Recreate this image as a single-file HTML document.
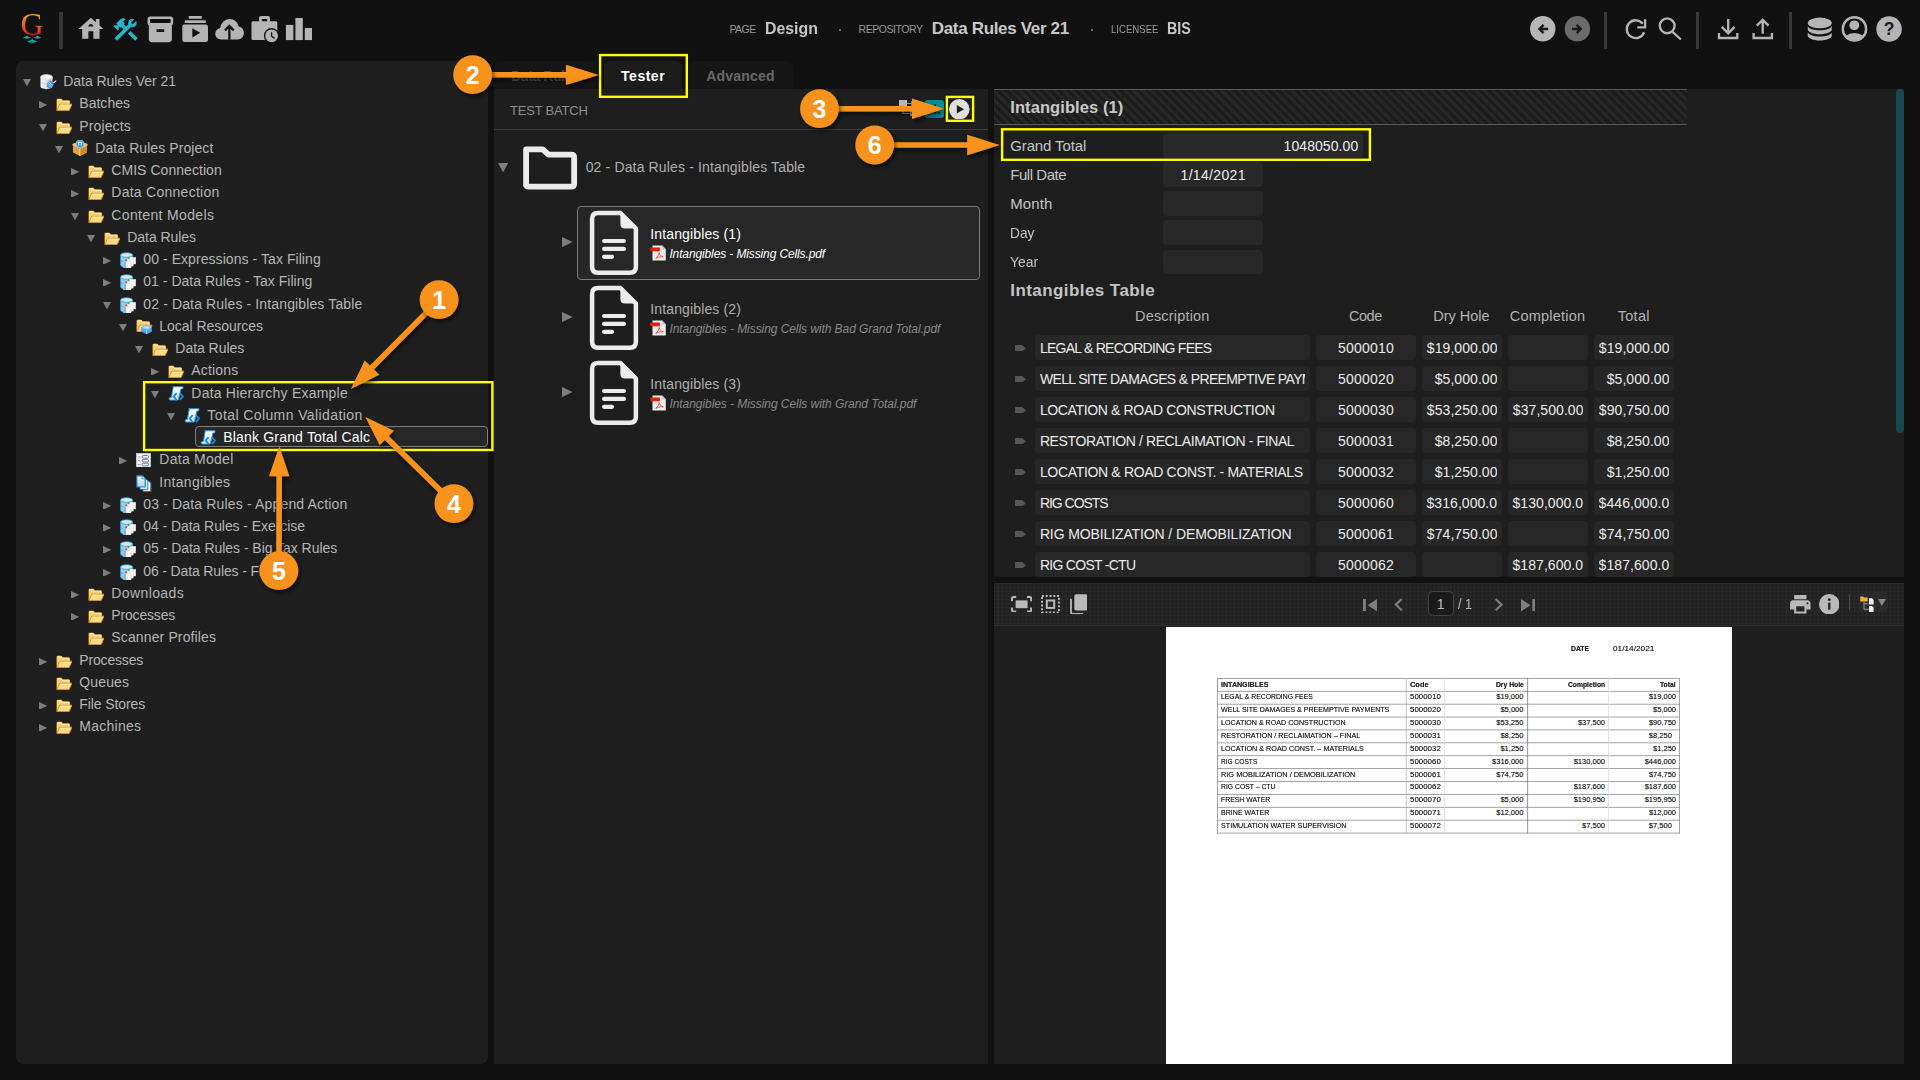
<!DOCTYPE html>
<html lang="en"><head><meta charset="utf-8"><title>Grooper Design - Data Rules Ver 21</title>
<style>
html,body{margin:0;padding:0;background:#111111;}
body{width:1920px;height:1080px;position:relative;overflow:hidden;font-family:"Liberation Sans",sans-serif;}
.b{position:absolute;display:block;box-sizing:border-box;}
.t{position:absolute;white-space:pre;line-height:20px;font-family:"Liberation Sans",sans-serif;}
</style></head>
<body>
<span class="t" style="left:20.400px;top:7px;font-family:'Liberation Serif',serif;font-size:32px;line-height:34px;background:linear-gradient(#f7a01e 25%,#f1582a 55%,#ec1c24 82%);-webkit-background-clip:text;background-clip:text;color:transparent;">G</span>
<svg class="b" style="left:21.00px;top:34.00px;" width="22.00" height="10.00" viewBox="0 0 22 10"><g fill="#12a79d"><path d="M1.3 3.6 Q5.8 2.6 5.9 .9 Q6.2 2.6 10.3 3.6 Q5.8 5.9 1.3 3.6z"/><path d="M12.1 3.6 Q16.4 2.6 16.6 .9 Q16.8 2.6 20.9 3.6 Q16.5 5.9 12.1 3.6z"/><path d="M6.1 7.4 Q10.9 6.4 11.2 4.6 Q11.5 6.4 16.3 7.4 Q11.2 9.9 6.1 7.4z"/></g></svg>
<div class="b" style="left:59.40px;top:12.00px;width:3.20px;height:36.80px;background:#383838;"></div>
<div class="b" style="left:1603.60px;top:12.00px;width:3.20px;height:36.80px;background:#383838;"></div>
<div class="b" style="left:1696.30px;top:12.00px;width:3.20px;height:36.80px;background:#383838;"></div>
<div class="b" style="left:1788.60px;top:12.00px;width:3.20px;height:36.80px;background:#383838;"></div>
<svg class="b" style="left:76.12px;top:14.00px;" width="29.76" height="29.76" viewBox="0 0 24 24"><path fill="#b4b4b4" d="M19 9.3V4h-3v2.6L12 3 2 12h3v8h5v-6h4v6h5v-8h3l-3-2.7zm-9 .7c0-1.1.9-2 2-2s2 .9 2 2h-4z"/></svg>
<svg class="b" style="left:111.13px;top:14.60px;" width="29.33" height="29.33" viewBox="0 0 24 24"><path fill="#25b7c9" d="M13.783 15.172l2.121-2.121 5.996 5.996-2.121 2.121zM17.5 10c1.93 0 3.5-1.57 3.5-3.5 0-.58-.16-1.12-.41-1.6l-2.7 2.7-1.49-1.49 2.7-2.7c-.48-.25-1.02-.41-1.6-.41C15.57 3 14 4.57 14 6.5c0 .41.08.8.21 1.16l-1.85 1.85-1.78-1.78.71-.71-1.41-1.41L12 3.49c-1.17-1.17-3.07-1.17-4.24 0L4.22 7.03l1.41 1.41H2.81l-.71.71 3.54 3.54.71-.71V9.15l1.41 1.41.71-.71 1.78 1.78-7.41 7.41 2.12 2.12L16.34 9.79c.36.13.75.21 1.16.21z"/></svg>
<svg class="b" style="left:144.94px;top:14.00px;" width="30.72" height="30.72" viewBox="0 0 24 24"><path fill="#b4b4b4" d="M20 2H4c-1 0-2 .9-2 2v3.01c0 .72.43 1.34 1 1.69V20c0 1.1 1.1 2 2 2h14c.9 0 2-.9 2-2V8.7c.57-.35 1-.97 1-1.69V4c0-1.1-1-2-2-2zm-5 12H9v-2h6v2zm5-7H4V4h16v3z"/></svg>
<svg class="b" style="left:0;top:0" width="400" height="60" viewBox="0 0 400 60"><g fill="#b4b4b4"><rect x="188.700" y="16" width="13.100" height="2.800" rx=".5"/><rect x="184.700" y="20.200" width="21.100" height="2.900" rx=".5"/><rect x="182.300" y="24.400" width="25.700" height="17.700" rx="2.400"/></g><path d="M192.300 28.200L200.200 32.800 192.300 37.400z" fill="#111"/><path fill="#b4b4b4" d="M221.300 39.500C217.900 39.500 215.300 37.100 215.300 33.800C215.300 30.900 217.300 28.700 220.200 28.100C221.100 22.800 224.800 18.900 229.800 18.900C234.300 18.900 237.700 21.900 238.600 26.600C241.600 26.900 243.900 29.500 243.900 32.800C243.900 36.500 241.200 39.500 237.700 39.500z"/><path d="M229.350 39.700V26.600M225 30.400L229.350 25.800 233.700 30.400" fill="none" stroke="#151515" stroke-width="2.300"/><path fill="#b4b4b4" fill-rule="evenodd" d="M253 21.200H259V18Q259 16 261 16H268Q270 16 270 18V21.200H275.800Q277.300 21.200 277.300 22.700V38.600Q277.300 40.100 275.800 40.100H253Q251.500 40.100 251.500 38.600V22.700Q251.500 21.200 253 21.200zM261.900 21.200H267.100V19.100H261.900z"/><circle cx="271.600" cy="35.800" r="7.700" fill="#111"/><circle cx="271.600" cy="35.800" r="6.400" fill="#b4b4b4"/><path d="M271.600 32.300V36.100L274.700 38.400" fill="none" stroke="#161616" stroke-width="1.300"/><g fill="#b4b4b4"><rect x="285.900" y="24.900" width="7.500" height="15.200"/><rect x="295.400" y="18" width="7.400" height="22.100"/><rect x="304.800" y="28" width="7.200" height="12.100"/></g></svg>
<span class="t" style="left:729.40px;top:19.00px;font-size:10.5px;color:#9a9a9a;letter-spacing:-0.533px;">PAGE</span>
<span class="t" style="left:765.40px;top:18.50px;font-size:17px;color:#c8c8c8;transform-origin:0 50%;transform:scaleX(0.9333);font-weight:700;">Design</span>
<div class="b" style="left:838.80px;top:28.80px;width:2.60px;height:2.60px;background:#888;border-radius:2px;"></div>
<span class="t" style="left:858.60px;top:19.00px;font-size:10.5px;color:#9a9a9a;letter-spacing:-0.463px;">REPOSITORY</span>
<span class="t" style="left:931.80px;top:18.50px;font-size:17px;color:#c8c8c8;letter-spacing:-0.331px;font-weight:700;">Data Rules Ver 21</span>
<div class="b" style="left:1090.60px;top:28.80px;width:2.60px;height:2.60px;background:#888;border-radius:2px;"></div>
<span class="t" style="left:1110.50px;top:19.00px;font-size:10.5px;color:#9a9a9a;transform-origin:0 50%;transform:scaleX(0.9146);">LICENSEE</span>
<span class="t" style="left:1167.20px;top:18.50px;font-size:17px;color:#c8c8c8;transform-origin:0 50%;transform:scaleX(0.8363);font-weight:700;">BIS</span>
<svg class="b" style="left:0;top:0" width="1920" height="60" viewBox="0 0 1920 60"><circle cx="1542.75" cy="28.8" r="12.75" fill="#b6b6b6"/><path d="M1548.2 29H1539.6M1543.6 24.9L1539.4 29 1543.6 33.100" fill="none" stroke="#161616" stroke-width="2.350"/><circle cx="1577.4" cy="28.8" r="12.75" fill="#6b6b6b"/><path d="M1572 29H1580.600M1576.600 24.900L1580.800 29 1576.600 33.100" fill="none" stroke="#1c1c1c" stroke-width="2.350"/><path d="M1642.71 23.72A8.9 8.9 0 1 0 1644.06 32.24" fill="none" stroke="#b4b4b4" stroke-width="2.350"/><path d="M1645.1 19.300V27.300H1637.300" fill="none" stroke="#b4b4b4" stroke-width="2.350"/><circle cx="1667.2" cy="25.800" r="7.400" fill="none" stroke="#b4b4b4" stroke-width="2.350"/><path d="M1672.300 31.700L1680.900 39.500" stroke="#b4b4b4" stroke-width="2.300"/><g fill="none" stroke="#b4b4b4" stroke-width="2.350"><path d="M1719 32.900V38H1737.300V32.900M1728.200 18.900V33M1721.800 26.900L1728.200 33.300 1734.600 26.900"/><path d="M1753.600 32.900V38H1771.900V32.900M1762.700 33.700V20M1756.800 25.700L1762.700 19.800 1768.600 25.700"/></g><g fill="#b4b4b4"><ellipse cx="1819.750" cy="22.900" rx="12.050" ry="5.300"/><path d="M1807.700 26.300c1.600 2.700 6.300 4 12.050 4s10.450-1.300 12.050-4v3c0 2.800-5.400 5-12.050 5s-12.050-2.200-12.050-5z"/><path d="M1807.700 32.400c1.600 2.700 6.300 4 12.050 4s10.450-1.300 12.050-4v3c0 2.800-5.400 5-12.050 5s-12.050-2.200-12.050-5z"/></g><clipPath id="uc"><circle cx="1854.450" cy="28.900" r="11.600"/></clipPath><circle cx="1854.450" cy="28.900" r="11.650" fill="none" stroke="#b4b4b4" stroke-width="2.400"/><circle cx="1854.300" cy="25.300" r="4.900" fill="#b4b4b4"/><ellipse cx="1854.450" cy="42.500" rx="12" ry="9.400" fill="#b4b4b4" clip-path="url(#uc)"/><circle cx="1889.050" cy="28.900" r="12.750" fill="#b4b4b4"/></svg>
<span class="t" style="left:1883.700px;top:19.300px;font-size:17.500px;font-weight:700;line-height:20px;color:#1c1c1c;">?</span>
<div class="b" style="left:16.00px;top:61.00px;width:472.00px;height:1002.50px;background:#1f1f1f;border-radius:7px;"></div>
<div class="b" style="left:195.00px;top:426.00px;width:293.00px;height:21.20px;background:#272727;border:1px solid #808080;border-radius:4px;"></div>
<svg class="b" style="left:23.20px;top:79.00px;" width="8.00" height="7.40" viewBox="0 0 8 7.400"><path d="M0 0H8L4 7.400z" fill="#7e7e7e"/></svg>
<svg class="b" style="left:39.80px;top:73.60px;" width="17.00" height="16.00" viewBox="0 0 17 16"><defs><linearGradient id="dbg" x1="0" x2="1"><stop offset="0" stop-color="#f4f6f8"/><stop offset=".5" stop-color="#dfe4ea"/><stop offset="1" stop-color="#aab4c0"/></linearGradient></defs><path d="M.5 3v9.500c0 1.400 2.700 2.500 6 2.500s6-1.100 6-2.500V3z" fill="url(#dbg)"/><ellipse cx="6.500" cy="3" rx="6" ry="2.500" fill="#f6f8fa" stroke="#c5ccd4" stroke-width=".6"/><path d="M.5 7.600c0 1.400 2.700 2.400 6 2.400" fill="none" stroke="#b8c0ca" stroke-width=".8"/><path d="M7.200 9.300l3.300-2.600 3 3.600-2.600 3.800-3.600-1z" fill="#4aa3ec" stroke="#2b7fd0" stroke-width=".6"/><path d="M8.200 9.600l3.400 3.400M9.500 8.400l3 3.300" stroke="#d6ecff" stroke-width=".7"/><path d="M13.200 9.200L16.200 6.600M10.800 6.400L12.500 4.500" stroke="#e4e4e4" stroke-width="1.100"/><path d="M7.400 13.700L5.700 15.300" stroke="#d8d8d8" stroke-width="1.200"/></svg>
<span class="t" style="left:63.30px;top:71.00px;font-size:14px;color:#b6b6b6;letter-spacing:-0.058px;">Data Rules Ver 21</span>
<svg class="b" style="left:39.00px;top:100.60px;" width="8.20" height="7.80" viewBox="0 0 8.200 7.800"><path d="M0 0L8.200 3.900 0 7.800z" fill="#7e7e7e"/></svg>
<svg class="b" style="left:55.50px;top:97.80px;" width="16.90" height="13.60" viewBox="0 0 17.5 13.8"><path d="M1 12.3V1.7Q1 1 1.700 1H5.600L7 2.700H13.500Q14.100 2.700 14.100 3.400V6" fill="#f3c766" stroke="#c98a2b" stroke-width="1"/><path d="M1 12.300V1.700Q1 1 1.700 1H5.600L7 2.700H13.500Q14.100 2.700 14.100 3.400V7H4z" fill="#f6cf72"/><path d="M1.800 2h3.400l1.300 1.600h6.700v2.500" fill="none" stroke="#fff2c4" stroke-width=".8"/><path d="M3.800 6.300H16.600L13.600 12.900H.900z" fill="#fbdb85" stroke="#cf9433" stroke-width="1" stroke-linejoin="round"/><path d="M4.500 7.300H15.100" stroke="#fff4cc" stroke-width=".8"/></svg>
<span class="t" style="left:79.30px;top:93.00px;font-size:14px;color:#b6b6b6;letter-spacing:0.018px;">Batches</span>
<svg class="b" style="left:39.20px;top:124.00px;" width="8.00" height="7.40" viewBox="0 0 8 7.400"><path d="M0 0H8L4 7.400z" fill="#7e7e7e"/></svg>
<svg class="b" style="left:55.50px;top:120.80px;" width="16.90" height="13.60" viewBox="0 0 17.5 13.8"><path d="M1 12.3V1.7Q1 1 1.700 1H5.600L7 2.700H13.500Q14.100 2.700 14.100 3.400V6" fill="#f3c766" stroke="#c98a2b" stroke-width="1"/><path d="M1 12.300V1.700Q1 1 1.700 1H5.600L7 2.700H13.500Q14.100 2.700 14.100 3.400V7H4z" fill="#f6cf72"/><path d="M1.800 2h3.400l1.300 1.600h6.700v2.500" fill="none" stroke="#fff2c4" stroke-width=".8"/><path d="M3.800 6.300H16.600L13.600 12.900H.900z" fill="#fbdb85" stroke="#cf9433" stroke-width="1" stroke-linejoin="round"/><path d="M4.500 7.300H15.100" stroke="#fff4cc" stroke-width=".8"/></svg>
<span class="t" style="left:79.30px;top:116.00px;font-size:14px;color:#b6b6b6;letter-spacing:0.118px;">Projects</span>
<svg class="b" style="left:55.20px;top:146.00px;" width="8.00" height="7.40" viewBox="0 0 8 7.400"><path d="M0 0H8L4 7.400z" fill="#7e7e7e"/></svg>
<svg class="b" style="left:72.00px;top:139.80px;" width="16.00" height="16.50" viewBox="0 0 16 16.500"><path d="M1 6.200L8 9l7-2.800V12.500L8 16 1 12.500z" fill="#e3a542"/><path d="M8 9l7-2.800V12.500L8 16z" fill="#c98a2b"/><path d="M1 6.200L.2 3.900 5 2.300 8 5l3-2.700 4.800 1.600L15 6.200 8 9z" fill="#f1c064"/><path d="M7.700 9V15.800" stroke="#fbe2a0" stroke-width=".8"/><circle cx="8" cy="3.800" r="3.900" fill="#2f8fe0"/><circle cx="8" cy="3.800" r="3.900" fill="none" stroke="#8fd0ff" stroke-width=".7"/><path d="M5.500 2.700c1.500-.8 3.500-.8 5 0M6.800 2.300v3.500M9.200 2.300v3.500" stroke="#fff" stroke-width=".9" fill="none"/></svg>
<span class="t" style="left:95.30px;top:138.00px;font-size:14px;color:#b6b6b6;letter-spacing:0.075px;">Data Rules Project</span>
<svg class="b" style="left:71.00px;top:167.60px;" width="8.20" height="7.80" viewBox="0 0 8.200 7.800"><path d="M0 0L8.200 3.900 0 7.800z" fill="#7e7e7e"/></svg>
<svg class="b" style="left:87.50px;top:164.80px;" width="16.90" height="13.60" viewBox="0 0 17.5 13.8"><path d="M1 12.3V1.7Q1 1 1.700 1H5.600L7 2.700H13.500Q14.100 2.700 14.100 3.400V6" fill="#f3c766" stroke="#c98a2b" stroke-width="1"/><path d="M1 12.300V1.700Q1 1 1.700 1H5.600L7 2.700H13.500Q14.100 2.700 14.100 3.400V7H4z" fill="#f6cf72"/><path d="M1.800 2h3.400l1.300 1.600h6.700v2.500" fill="none" stroke="#fff2c4" stroke-width=".8"/><path d="M3.800 6.300H16.600L13.600 12.900H.900z" fill="#fbdb85" stroke="#cf9433" stroke-width="1" stroke-linejoin="round"/><path d="M4.500 7.300H15.100" stroke="#fff4cc" stroke-width=".8"/></svg>
<span class="t" style="left:111.30px;top:160.00px;font-size:14px;color:#b6b6b6;letter-spacing:0.048px;">CMIS Connection</span>
<svg class="b" style="left:71.00px;top:189.60px;" width="8.20" height="7.80" viewBox="0 0 8.200 7.800"><path d="M0 0L8.200 3.900 0 7.800z" fill="#7e7e7e"/></svg>
<svg class="b" style="left:87.50px;top:186.80px;" width="16.90" height="13.60" viewBox="0 0 17.5 13.8"><path d="M1 12.3V1.7Q1 1 1.700 1H5.600L7 2.700H13.500Q14.100 2.700 14.100 3.400V6" fill="#f3c766" stroke="#c98a2b" stroke-width="1"/><path d="M1 12.300V1.700Q1 1 1.700 1H5.600L7 2.700H13.500Q14.100 2.700 14.100 3.400V7H4z" fill="#f6cf72"/><path d="M1.800 2h3.400l1.300 1.600h6.700v2.500" fill="none" stroke="#fff2c4" stroke-width=".8"/><path d="M3.800 6.300H16.600L13.600 12.900H.900z" fill="#fbdb85" stroke="#cf9433" stroke-width="1" stroke-linejoin="round"/><path d="M4.500 7.300H15.100" stroke="#fff4cc" stroke-width=".8"/></svg>
<span class="t" style="left:111.30px;top:182.00px;font-size:14px;color:#b6b6b6;letter-spacing:0.264px;">Data Connection</span>
<svg class="b" style="left:71.20px;top:213.00px;" width="8.00" height="7.40" viewBox="0 0 8 7.400"><path d="M0 0H8L4 7.400z" fill="#7e7e7e"/></svg>
<svg class="b" style="left:87.50px;top:209.80px;" width="16.90" height="13.60" viewBox="0 0 17.5 13.8"><path d="M1 12.3V1.7Q1 1 1.700 1H5.600L7 2.700H13.500Q14.100 2.700 14.100 3.400V6" fill="#f3c766" stroke="#c98a2b" stroke-width="1"/><path d="M1 12.300V1.700Q1 1 1.700 1H5.600L7 2.700H13.500Q14.100 2.700 14.100 3.400V7H4z" fill="#f6cf72"/><path d="M1.800 2h3.400l1.300 1.600h6.700v2.500" fill="none" stroke="#fff2c4" stroke-width=".8"/><path d="M3.800 6.300H16.600L13.600 12.900H.900z" fill="#fbdb85" stroke="#cf9433" stroke-width="1" stroke-linejoin="round"/><path d="M4.500 7.300H15.100" stroke="#fff4cc" stroke-width=".8"/></svg>
<span class="t" style="left:111.30px;top:205.00px;font-size:14px;color:#b6b6b6;letter-spacing:0.356px;">Content Models</span>
<svg class="b" style="left:87.20px;top:235.00px;" width="8.00" height="7.40" viewBox="0 0 8 7.400"><path d="M0 0H8L4 7.400z" fill="#7e7e7e"/></svg>
<svg class="b" style="left:103.50px;top:231.80px;" width="16.90" height="13.60" viewBox="0 0 17.5 13.8"><path d="M1 12.3V1.7Q1 1 1.700 1H5.600L7 2.700H13.500Q14.100 2.700 14.100 3.400V6" fill="#f3c766" stroke="#c98a2b" stroke-width="1"/><path d="M1 12.300V1.700Q1 1 1.700 1H5.600L7 2.700H13.500Q14.100 2.700 14.100 3.400V7H4z" fill="#f6cf72"/><path d="M1.800 2h3.400l1.300 1.600h6.700v2.500" fill="none" stroke="#fff2c4" stroke-width=".8"/><path d="M3.800 6.300H16.600L13.600 12.900H.900z" fill="#fbdb85" stroke="#cf9433" stroke-width="1" stroke-linejoin="round"/><path d="M4.500 7.300H15.100" stroke="#fff4cc" stroke-width=".8"/></svg>
<span class="t" style="left:127.30px;top:227.00px;font-size:14px;color:#b6b6b6;letter-spacing:-0.063px;">Data Rules</span>
<svg class="b" style="left:103.00px;top:256.60px;" width="8.20" height="7.80" viewBox="0 0 8.200 7.800"><path d="M0 0L8.200 3.900 0 7.800z" fill="#7e7e7e"/></svg>
<svg class="b" style="left:120.00px;top:251.90px;" width="17.00" height="16.50" viewBox="0 0 17 16.500"><path d="M.6 3v10c0 1.300 2.700 2.400 6 2.400s6-1.100 6-2.400V3z" fill="#8fd0ee" stroke="#3b9bd2" stroke-width=".8"/><ellipse cx="6.600" cy="3" rx="6" ry="2.300" fill="#cfeefa" stroke="#3b9bd2" stroke-width=".8"/><path d="M.6 7.800c0 1.300 2.700 2.300 6 2.300" fill="none" stroke="#3b9bd2" stroke-width=".7"/><rect x="8.600" y="5.300" width="7.200" height="6.700" fill="#fff" stroke="#d0d0d0" stroke-width=".4"/><rect x="6.100" y="7.400" width="7.200" height="6.700" fill="#fafafa" stroke="#cfcfcf" stroke-width=".4"/><rect x="3.700" y="9.600" width="7.300" height="6.500" fill="#f4f4f4" stroke="#c4c4c4" stroke-width=".4"/><rect x="3.700" y="9.600" width="2.200" height="6.500" fill="#7ab6ec"/><circle cx="6.300" cy="8.200" r="1.050" fill="#e8392c"/><circle cx="8.700" cy="6" r="1" fill="#3fa51f"/></svg>
<span class="t" style="left:143.30px;top:249.00px;font-size:14px;color:#b6b6b6;letter-spacing:0.064px;">00 - Expressions - Tax Filing</span>
<svg class="b" style="left:103.00px;top:278.60px;" width="8.20" height="7.80" viewBox="0 0 8.200 7.800"><path d="M0 0L8.200 3.900 0 7.800z" fill="#7e7e7e"/></svg>
<svg class="b" style="left:120.00px;top:273.90px;" width="17.00" height="16.50" viewBox="0 0 17 16.500"><path d="M.6 3v10c0 1.300 2.700 2.400 6 2.400s6-1.100 6-2.400V3z" fill="#8fd0ee" stroke="#3b9bd2" stroke-width=".8"/><ellipse cx="6.600" cy="3" rx="6" ry="2.300" fill="#cfeefa" stroke="#3b9bd2" stroke-width=".8"/><path d="M.6 7.800c0 1.300 2.700 2.300 6 2.300" fill="none" stroke="#3b9bd2" stroke-width=".7"/><rect x="8.600" y="5.300" width="7.200" height="6.700" fill="#fff" stroke="#d0d0d0" stroke-width=".4"/><rect x="6.100" y="7.400" width="7.200" height="6.700" fill="#fafafa" stroke="#cfcfcf" stroke-width=".4"/><rect x="3.700" y="9.600" width="7.300" height="6.500" fill="#f4f4f4" stroke="#c4c4c4" stroke-width=".4"/><rect x="3.700" y="9.600" width="2.200" height="6.500" fill="#7ab6ec"/><circle cx="6.300" cy="8.200" r="1.050" fill="#e8392c"/><circle cx="8.700" cy="6" r="1" fill="#3fa51f"/></svg>
<span class="t" style="left:143.30px;top:271.00px;font-size:14px;color:#b6b6b6;letter-spacing:0.014px;">01 - Data Rules - Tax Filing</span>
<svg class="b" style="left:103.20px;top:302.00px;" width="8.00" height="7.40" viewBox="0 0 8 7.400"><path d="M0 0H8L4 7.400z" fill="#7e7e7e"/></svg>
<svg class="b" style="left:120.00px;top:296.90px;" width="17.00" height="16.50" viewBox="0 0 17 16.500"><path d="M.6 3v10c0 1.300 2.700 2.400 6 2.400s6-1.100 6-2.400V3z" fill="#8fd0ee" stroke="#3b9bd2" stroke-width=".8"/><ellipse cx="6.600" cy="3" rx="6" ry="2.300" fill="#cfeefa" stroke="#3b9bd2" stroke-width=".8"/><path d="M.6 7.800c0 1.300 2.700 2.300 6 2.300" fill="none" stroke="#3b9bd2" stroke-width=".7"/><rect x="8.600" y="5.300" width="7.200" height="6.700" fill="#fff" stroke="#d0d0d0" stroke-width=".4"/><rect x="6.100" y="7.400" width="7.200" height="6.700" fill="#fafafa" stroke="#cfcfcf" stroke-width=".4"/><rect x="3.700" y="9.600" width="7.300" height="6.500" fill="#f4f4f4" stroke="#c4c4c4" stroke-width=".4"/><rect x="3.700" y="9.600" width="2.200" height="6.500" fill="#7ab6ec"/><circle cx="6.300" cy="8.200" r="1.050" fill="#e8392c"/><circle cx="8.700" cy="6" r="1" fill="#3fa51f"/></svg>
<span class="t" style="left:143.30px;top:294.00px;font-size:14px;color:#b6b6b6;letter-spacing:0.130px;">02 - Data Rules - Intangibles Table</span>
<svg class="b" style="left:119.20px;top:324.00px;" width="8.00" height="7.40" viewBox="0 0 8 7.400"><path d="M0 0H8L4 7.400z" fill="#7e7e7e"/></svg>
<svg class="b" style="left:135.80px;top:318.70px;" width="16.90" height="13.60" viewBox="0 0 17.5 13.8"><path d="M1 12.3V1.7Q1 1 1.700 1H5.600L7 2.700H13.500Q14.100 2.700 14.100 3.400V6" fill="#f3c766" stroke="#c98a2b" stroke-width="1"/><path d="M1 12.300V1.700Q1 1 1.700 1H5.600L7 2.700H13.500Q14.100 2.700 14.100 3.400V7H4z" fill="#f6cf72"/><path d="M1.800 2h3.400l1.300 1.600h6.700v2.500" fill="none" stroke="#fff2c4" stroke-width=".8"/><path d="M3.800 6.300H16.600L13.600 12.900H.900z" fill="#fbdb85" stroke="#cf9433" stroke-width="1" stroke-linejoin="round"/><path d="M4.500 7.300H15.100" stroke="#fff4cc" stroke-width=".8"/></svg>
<svg class="b" style="left:141.20px;top:325.00px;" width="11.20" height="9.60" viewBox="0 0 12 10"><path d="M6 .3L11.500 2.500V6.800L6 9.600.5 6.800V2.500z" fill="#5aa9ee" stroke="#3d8fe0" stroke-width=".5"/><path d="M.5 2.500L6 4.600l5.500-2.100L6 .3z" fill="#9ccdf8"/><path d="M6 4.600V9.600M3.200 1.500l5.500 2.100M8.700 1.500L3.200 3.600" stroke="#d5eaff" stroke-width=".6"/></svg>
<span class="t" style="left:159.30px;top:316.00px;font-size:14px;color:#b6b6b6;letter-spacing:-0.042px;">Local Resources</span>
<svg class="b" style="left:135.20px;top:346.00px;" width="8.00" height="7.40" viewBox="0 0 8 7.400"><path d="M0 0H8L4 7.400z" fill="#7e7e7e"/></svg>
<svg class="b" style="left:151.50px;top:342.80px;" width="16.90" height="13.60" viewBox="0 0 17.5 13.8"><path d="M1 12.3V1.7Q1 1 1.700 1H5.600L7 2.700H13.500Q14.100 2.700 14.100 3.400V6" fill="#f3c766" stroke="#c98a2b" stroke-width="1"/><path d="M1 12.300V1.700Q1 1 1.700 1H5.600L7 2.700H13.500Q14.100 2.700 14.100 3.400V7H4z" fill="#f6cf72"/><path d="M1.800 2h3.400l1.300 1.600h6.700v2.500" fill="none" stroke="#fff2c4" stroke-width=".8"/><path d="M3.800 6.300H16.600L13.600 12.900H.900z" fill="#fbdb85" stroke="#cf9433" stroke-width="1" stroke-linejoin="round"/><path d="M4.500 7.300H15.100" stroke="#fff4cc" stroke-width=".8"/></svg>
<span class="t" style="left:175.30px;top:338.00px;font-size:14px;color:#b6b6b6;letter-spacing:-0.029px;">Data Rules</span>
<svg class="b" style="left:151.00px;top:367.60px;" width="8.20" height="7.80" viewBox="0 0 8.200 7.800"><path d="M0 0L8.200 3.900 0 7.800z" fill="#7e7e7e"/></svg>
<svg class="b" style="left:167.50px;top:364.80px;" width="16.90" height="13.60" viewBox="0 0 17.5 13.8"><path d="M1 12.3V1.7Q1 1 1.700 1H5.600L7 2.700H13.500Q14.100 2.700 14.100 3.400V6" fill="#f3c766" stroke="#c98a2b" stroke-width="1"/><path d="M1 12.300V1.700Q1 1 1.700 1H5.600L7 2.700H13.500Q14.100 2.700 14.100 3.400V7H4z" fill="#f6cf72"/><path d="M1.800 2h3.400l1.300 1.600h6.700v2.500" fill="none" stroke="#fff2c4" stroke-width=".8"/><path d="M3.800 6.300H16.600L13.600 12.900H.900z" fill="#fbdb85" stroke="#cf9433" stroke-width="1" stroke-linejoin="round"/><path d="M4.500 7.300H15.100" stroke="#fff4cc" stroke-width=".8"/></svg>
<span class="t" style="left:191.30px;top:360.00px;font-size:14px;color:#b6b6b6;letter-spacing:0.181px;">Actions</span>
<svg class="b" style="left:151.20px;top:391.00px;" width="8.00" height="7.40" viewBox="0 0 8 7.400"><path d="M0 0H8L4 7.400z" fill="#7e7e7e"/></svg>
<svg class="b" style="left:167.90px;top:385.70px;" width="16.80" height="15.00" viewBox="0 0 17 16"><defs><linearGradient id="rg" x1="0" y1="0" x2="0" y2="1"><stop offset="0" stop-color="#ffffff"/><stop offset="1" stop-color="#cfe6f8"/></linearGradient></defs><path d="M4.600 .8H15.200Q16.500 2.300 14.800 3.200H13.200L11 13.800Q10.800 15 9.600 15H1.200Q.2 13.300 1.600 12.300H3.200L5 1.700Q5.300 .8 6 .8z" fill="url(#rg)" stroke="#2b9be4" stroke-width="1" stroke-linejoin="round"/><path d="M8.800 7.600L5.600 11.300 8.800 15M12.300 7.600l3.200 3.700-3.200 3.700" fill="none" stroke="#1f86d6" stroke-width="1.900"/><path d="M10.200 10.200v1.200M10.900 12.200v1" stroke="#1f86d6" stroke-width="1"/></svg>
<span class="t" style="left:191.30px;top:383.00px;font-size:14px;color:#b6b6b6;letter-spacing:0.222px;">Data Hierarchy Example</span>
<svg class="b" style="left:167.20px;top:413.00px;" width="8.00" height="7.40" viewBox="0 0 8 7.400"><path d="M0 0H8L4 7.400z" fill="#7e7e7e"/></svg>
<svg class="b" style="left:183.90px;top:407.70px;" width="16.80" height="15.00" viewBox="0 0 17 16"><defs><linearGradient id="rg" x1="0" y1="0" x2="0" y2="1"><stop offset="0" stop-color="#ffffff"/><stop offset="1" stop-color="#cfe6f8"/></linearGradient></defs><path d="M4.600 .8H15.200Q16.500 2.300 14.800 3.200H13.200L11 13.800Q10.800 15 9.600 15H1.200Q.2 13.300 1.600 12.300H3.200L5 1.700Q5.300 .8 6 .8z" fill="url(#rg)" stroke="#2b9be4" stroke-width="1" stroke-linejoin="round"/><path d="M8.800 7.600L5.600 11.300 8.800 15M12.300 7.600l3.200 3.700-3.200 3.700" fill="none" stroke="#1f86d6" stroke-width="1.900"/><path d="M10.200 10.200v1.200M10.900 12.200v1" stroke="#1f86d6" stroke-width="1"/></svg>
<span class="t" style="left:207.30px;top:405.00px;font-size:14px;color:#b6b6b6;letter-spacing:0.406px;">Total Column Validation</span>
<svg class="b" style="left:199.90px;top:429.70px;" width="16.80" height="15.00" viewBox="0 0 17 16"><defs><linearGradient id="rg" x1="0" y1="0" x2="0" y2="1"><stop offset="0" stop-color="#ffffff"/><stop offset="1" stop-color="#cfe6f8"/></linearGradient></defs><path d="M4.600 .8H15.200Q16.500 2.300 14.800 3.200H13.200L11 13.800Q10.800 15 9.600 15H1.200Q.2 13.300 1.600 12.300H3.200L5 1.700Q5.300 .8 6 .8z" fill="url(#rg)" stroke="#2b9be4" stroke-width="1" stroke-linejoin="round"/><path d="M8.800 7.600L5.600 11.300 8.800 15M12.300 7.600l3.200 3.700-3.200 3.700" fill="none" stroke="#1f86d6" stroke-width="1.900"/><path d="M10.200 10.200v1.200M10.900 12.200v1" stroke="#1f86d6" stroke-width="1"/></svg>
<span class="t" style="left:223.30px;top:427.00px;font-size:14px;color:#ffffff;letter-spacing:0.179px;">Blank Grand Total Calc</span>
<svg class="b" style="left:119.00px;top:456.60px;" width="8.20" height="7.80" viewBox="0 0 8.200 7.800"><path d="M0 0L8.200 3.900 0 7.800z" fill="#7e7e7e"/></svg>
<svg class="b" style="left:136.10px;top:452.60px;" width="14.90" height="14.90" viewBox="0 0 15.500 15.500"><rect x=".3" y=".3" width="14.900" height="14.900" fill="#eef2f8" stroke="#c9d2e0" stroke-width=".6"/><rect x="2" y="3.6" width="2.800" height="1" fill="#9a9a9a"/><rect x="6.400" y="2.6" width="6.600" height="2.800" rx="1.300" fill="#fff" stroke="#56647a" stroke-width=".9"/><rect x="2" y="7.6" width="2.800" height="1" fill="#9a9a9a"/><rect x="6.400" y="6.6" width="6.600" height="2.800" rx="1.300" fill="#fff" stroke="#56647a" stroke-width=".9"/><rect x="2" y="11.6" width="2.800" height="1" fill="#9a9a9a"/><rect x="6.400" y="10.6" width="6.600" height="2.800" rx="1.300" fill="#fff" stroke="#56647a" stroke-width=".9"/></svg>
<span class="t" style="left:159.30px;top:449.00px;font-size:14px;color:#b6b6b6;letter-spacing:0.266px;">Data Model</span>
<svg class="b" style="left:136.00px;top:475.00px;" width="16.50" height="16.50" viewBox="0 0 16.500 16.500"><path d="M7 5.500h5l2.800 2.800v8H7z" fill="#fff" stroke="#1b7cc4" stroke-width="1"/><path d="M4 3.200h5l2.800 2.800v8.300H4z" fill="#fff" stroke="#1b7cc4" stroke-width="1"/><defs><linearGradient id="dg" x1="0" y1="0" x2="0" y2="1"><stop offset="0" stop-color="#ffffff"/><stop offset="1" stop-color="#9fd3ea"/></linearGradient></defs><path d="M.8 .8h5.700l2.800 2.800v8.400H.8z" fill="url(#dg)" stroke="#1b7cc4" stroke-width="1.200"/><path d="M6.200 1v2.800h2.800" fill="#fff" stroke="#1b7cc4" stroke-width=".8"/></svg>
<span class="t" style="left:159.30px;top:472.00px;font-size:14px;color:#b6b6b6;letter-spacing:0.297px;">Intangibles</span>
<svg class="b" style="left:103.00px;top:501.60px;" width="8.20" height="7.80" viewBox="0 0 8.200 7.800"><path d="M0 0L8.200 3.900 0 7.800z" fill="#7e7e7e"/></svg>
<svg class="b" style="left:120.00px;top:496.90px;" width="17.00" height="16.50" viewBox="0 0 17 16.500"><path d="M.6 3v10c0 1.300 2.700 2.400 6 2.400s6-1.100 6-2.400V3z" fill="#8fd0ee" stroke="#3b9bd2" stroke-width=".8"/><ellipse cx="6.600" cy="3" rx="6" ry="2.300" fill="#cfeefa" stroke="#3b9bd2" stroke-width=".8"/><path d="M.6 7.800c0 1.300 2.700 2.300 6 2.300" fill="none" stroke="#3b9bd2" stroke-width=".7"/><rect x="8.600" y="5.300" width="7.200" height="6.700" fill="#fff" stroke="#d0d0d0" stroke-width=".4"/><rect x="6.100" y="7.400" width="7.200" height="6.700" fill="#fafafa" stroke="#cfcfcf" stroke-width=".4"/><rect x="3.700" y="9.600" width="7.300" height="6.500" fill="#f4f4f4" stroke="#c4c4c4" stroke-width=".4"/><rect x="3.700" y="9.600" width="2.200" height="6.500" fill="#7ab6ec"/><circle cx="6.300" cy="8.200" r="1.050" fill="#e8392c"/><circle cx="8.700" cy="6" r="1" fill="#3fa51f"/></svg>
<span class="t" style="left:143.30px;top:494.00px;font-size:14px;color:#b6b6b6;letter-spacing:0.158px;">03 - Data Rules - Append Action</span>
<svg class="b" style="left:103.00px;top:523.60px;" width="8.20" height="7.80" viewBox="0 0 8.200 7.800"><path d="M0 0L8.200 3.900 0 7.800z" fill="#7e7e7e"/></svg>
<svg class="b" style="left:120.00px;top:518.90px;" width="17.00" height="16.50" viewBox="0 0 17 16.500"><path d="M.6 3v10c0 1.300 2.700 2.400 6 2.400s6-1.100 6-2.400V3z" fill="#8fd0ee" stroke="#3b9bd2" stroke-width=".8"/><ellipse cx="6.600" cy="3" rx="6" ry="2.300" fill="#cfeefa" stroke="#3b9bd2" stroke-width=".8"/><path d="M.6 7.800c0 1.300 2.700 2.300 6 2.300" fill="none" stroke="#3b9bd2" stroke-width=".7"/><rect x="8.600" y="5.300" width="7.200" height="6.700" fill="#fff" stroke="#d0d0d0" stroke-width=".4"/><rect x="6.100" y="7.400" width="7.200" height="6.700" fill="#fafafa" stroke="#cfcfcf" stroke-width=".4"/><rect x="3.700" y="9.600" width="7.300" height="6.500" fill="#f4f4f4" stroke="#c4c4c4" stroke-width=".4"/><rect x="3.700" y="9.600" width="2.200" height="6.500" fill="#7ab6ec"/><circle cx="6.300" cy="8.200" r="1.050" fill="#e8392c"/><circle cx="8.700" cy="6" r="1" fill="#3fa51f"/></svg>
<span class="t" style="left:143.30px;top:516.00px;font-size:14px;color:#b6b6b6;letter-spacing:-0.068px;">04 - Data Rules - Exercise</span>
<svg class="b" style="left:103.00px;top:545.60px;" width="8.20" height="7.80" viewBox="0 0 8.200 7.800"><path d="M0 0L8.200 3.900 0 7.800z" fill="#7e7e7e"/></svg>
<svg class="b" style="left:120.00px;top:540.90px;" width="17.00" height="16.50" viewBox="0 0 17 16.500"><path d="M.6 3v10c0 1.300 2.700 2.400 6 2.400s6-1.100 6-2.400V3z" fill="#8fd0ee" stroke="#3b9bd2" stroke-width=".8"/><ellipse cx="6.600" cy="3" rx="6" ry="2.300" fill="#cfeefa" stroke="#3b9bd2" stroke-width=".8"/><path d="M.6 7.800c0 1.300 2.700 2.300 6 2.300" fill="none" stroke="#3b9bd2" stroke-width=".7"/><rect x="8.600" y="5.300" width="7.200" height="6.700" fill="#fff" stroke="#d0d0d0" stroke-width=".4"/><rect x="6.100" y="7.400" width="7.200" height="6.700" fill="#fafafa" stroke="#cfcfcf" stroke-width=".4"/><rect x="3.700" y="9.600" width="7.300" height="6.500" fill="#f4f4f4" stroke="#c4c4c4" stroke-width=".4"/><rect x="3.700" y="9.600" width="2.200" height="6.500" fill="#7ab6ec"/><circle cx="6.300" cy="8.200" r="1.050" fill="#e8392c"/><circle cx="8.700" cy="6" r="1" fill="#3fa51f"/></svg>
<span class="t" style="left:143.30px;top:538.00px;font-size:14px;color:#b6b6b6;letter-spacing:-0.036px;">05 - Data Rules - Big Tax Rules</span>
<svg class="b" style="left:103.00px;top:568.60px;" width="8.20" height="7.80" viewBox="0 0 8.200 7.800"><path d="M0 0L8.200 3.900 0 7.800z" fill="#7e7e7e"/></svg>
<svg class="b" style="left:120.00px;top:563.90px;" width="17.00" height="16.50" viewBox="0 0 17 16.500"><path d="M.6 3v10c0 1.300 2.700 2.400 6 2.400s6-1.100 6-2.400V3z" fill="#8fd0ee" stroke="#3b9bd2" stroke-width=".8"/><ellipse cx="6.600" cy="3" rx="6" ry="2.300" fill="#cfeefa" stroke="#3b9bd2" stroke-width=".8"/><path d="M.6 7.800c0 1.300 2.700 2.300 6 2.300" fill="none" stroke="#3b9bd2" stroke-width=".7"/><rect x="8.600" y="5.300" width="7.200" height="6.700" fill="#fff" stroke="#d0d0d0" stroke-width=".4"/><rect x="6.100" y="7.400" width="7.200" height="6.700" fill="#fafafa" stroke="#cfcfcf" stroke-width=".4"/><rect x="3.700" y="9.600" width="7.300" height="6.500" fill="#f4f4f4" stroke="#c4c4c4" stroke-width=".4"/><rect x="3.700" y="9.600" width="2.200" height="6.500" fill="#7ab6ec"/><circle cx="6.300" cy="8.200" r="1.050" fill="#e8392c"/><circle cx="8.700" cy="6" r="1" fill="#3fa51f"/></svg>
<span class="t" style="left:143.30px;top:561.00px;font-size:14px;color:#b6b6b6;letter-spacing:-0.144px;">06 - Data Rules - Final</span>
<svg class="b" style="left:71.00px;top:590.60px;" width="8.20" height="7.80" viewBox="0 0 8.200 7.800"><path d="M0 0L8.200 3.900 0 7.800z" fill="#7e7e7e"/></svg>
<svg class="b" style="left:87.50px;top:587.80px;" width="16.90" height="13.60" viewBox="0 0 17.5 13.8"><path d="M1 12.3V1.7Q1 1 1.700 1H5.600L7 2.700H13.500Q14.100 2.700 14.100 3.400V6" fill="#f3c766" stroke="#c98a2b" stroke-width="1"/><path d="M1 12.300V1.700Q1 1 1.700 1H5.600L7 2.700H13.500Q14.100 2.700 14.100 3.400V7H4z" fill="#f6cf72"/><path d="M1.800 2h3.400l1.300 1.600h6.700v2.500" fill="none" stroke="#fff2c4" stroke-width=".8"/><path d="M3.800 6.300H16.600L13.600 12.900H.900z" fill="#fbdb85" stroke="#cf9433" stroke-width="1" stroke-linejoin="round"/><path d="M4.500 7.300H15.100" stroke="#fff4cc" stroke-width=".8"/></svg>
<span class="t" style="left:111.30px;top:583.00px;font-size:14px;color:#b6b6b6;letter-spacing:0.391px;">Downloads</span>
<svg class="b" style="left:71.00px;top:612.60px;" width="8.20" height="7.80" viewBox="0 0 8.200 7.800"><path d="M0 0L8.200 3.900 0 7.800z" fill="#7e7e7e"/></svg>
<svg class="b" style="left:87.50px;top:609.80px;" width="16.90" height="13.60" viewBox="0 0 17.5 13.8"><path d="M1 12.3V1.7Q1 1 1.700 1H5.600L7 2.700H13.500Q14.100 2.700 14.100 3.400V6" fill="#f3c766" stroke="#c98a2b" stroke-width="1"/><path d="M1 12.300V1.700Q1 1 1.700 1H5.600L7 2.700H13.500Q14.100 2.700 14.100 3.400V7H4z" fill="#f6cf72"/><path d="M1.800 2h3.400l1.300 1.600h6.700v2.500" fill="none" stroke="#fff2c4" stroke-width=".8"/><path d="M3.800 6.300H16.600L13.600 12.900H.900z" fill="#fbdb85" stroke="#cf9433" stroke-width="1" stroke-linejoin="round"/><path d="M4.500 7.300H15.100" stroke="#fff4cc" stroke-width=".8"/></svg>
<span class="t" style="left:111.30px;top:605.00px;font-size:14px;color:#b6b6b6;letter-spacing:-0.170px;">Processes</span>
<svg class="b" style="left:87.50px;top:631.80px;" width="16.90" height="13.60" viewBox="0 0 17.5 13.8"><path d="M1 12.3V1.7Q1 1 1.700 1H5.600L7 2.700H13.500Q14.100 2.700 14.100 3.400V6" fill="#f3c766" stroke="#c98a2b" stroke-width="1"/><path d="M1 12.300V1.700Q1 1 1.700 1H5.600L7 2.700H13.500Q14.100 2.700 14.100 3.400V7H4z" fill="#f6cf72"/><path d="M1.800 2h3.400l1.300 1.600h6.700v2.500" fill="none" stroke="#fff2c4" stroke-width=".8"/><path d="M3.800 6.300H16.600L13.600 12.900H.900z" fill="#fbdb85" stroke="#cf9433" stroke-width="1" stroke-linejoin="round"/><path d="M4.500 7.300H15.100" stroke="#fff4cc" stroke-width=".8"/></svg>
<span class="t" style="left:111.30px;top:627.00px;font-size:14px;color:#b6b6b6;letter-spacing:0.132px;">Scanner Profiles</span>
<svg class="b" style="left:39.00px;top:657.60px;" width="8.20" height="7.80" viewBox="0 0 8.200 7.800"><path d="M0 0L8.200 3.900 0 7.800z" fill="#7e7e7e"/></svg>
<svg class="b" style="left:55.50px;top:654.80px;" width="16.90" height="13.60" viewBox="0 0 17.5 13.8"><path d="M1 12.3V1.7Q1 1 1.700 1H5.600L7 2.700H13.500Q14.100 2.700 14.100 3.400V6" fill="#f3c766" stroke="#c98a2b" stroke-width="1"/><path d="M1 12.300V1.700Q1 1 1.700 1H5.600L7 2.700H13.500Q14.100 2.700 14.100 3.400V7H4z" fill="#f6cf72"/><path d="M1.800 2h3.400l1.300 1.600h6.700v2.500" fill="none" stroke="#fff2c4" stroke-width=".8"/><path d="M3.800 6.300H16.600L13.600 12.900H.900z" fill="#fbdb85" stroke="#cf9433" stroke-width="1" stroke-linejoin="round"/><path d="M4.500 7.300H15.100" stroke="#fff4cc" stroke-width=".8"/></svg>
<span class="t" style="left:79.30px;top:650.00px;font-size:14px;color:#b6b6b6;letter-spacing:-0.170px;">Processes</span>
<svg class="b" style="left:55.50px;top:676.80px;" width="16.90" height="13.60" viewBox="0 0 17.5 13.8"><path d="M1 12.3V1.7Q1 1 1.700 1H5.600L7 2.700H13.500Q14.100 2.700 14.100 3.400V6" fill="#f3c766" stroke="#c98a2b" stroke-width="1"/><path d="M1 12.300V1.700Q1 1 1.700 1H5.600L7 2.700H13.500Q14.100 2.700 14.100 3.400V7H4z" fill="#f6cf72"/><path d="M1.800 2h3.400l1.300 1.600h6.700v2.500" fill="none" stroke="#fff2c4" stroke-width=".8"/><path d="M3.800 6.300H16.600L13.600 12.900H.900z" fill="#fbdb85" stroke="#cf9433" stroke-width="1" stroke-linejoin="round"/><path d="M4.500 7.300H15.100" stroke="#fff4cc" stroke-width=".8"/></svg>
<span class="t" style="left:79.30px;top:672.00px;font-size:14px;color:#b6b6b6;letter-spacing:0.132px;">Queues</span>
<svg class="b" style="left:39.00px;top:701.60px;" width="8.20" height="7.80" viewBox="0 0 8.200 7.800"><path d="M0 0L8.200 3.900 0 7.800z" fill="#7e7e7e"/></svg>
<svg class="b" style="left:55.50px;top:698.80px;" width="16.90" height="13.60" viewBox="0 0 17.5 13.8"><path d="M1 12.3V1.7Q1 1 1.700 1H5.600L7 2.700H13.500Q14.100 2.700 14.100 3.400V6" fill="#f3c766" stroke="#c98a2b" stroke-width="1"/><path d="M1 12.300V1.700Q1 1 1.700 1H5.600L7 2.700H13.500Q14.100 2.700 14.100 3.400V7H4z" fill="#f6cf72"/><path d="M1.800 2h3.400l1.300 1.600h6.700v2.500" fill="none" stroke="#fff2c4" stroke-width=".8"/><path d="M3.800 6.300H16.600L13.600 12.900H.900z" fill="#fbdb85" stroke="#cf9433" stroke-width="1" stroke-linejoin="round"/><path d="M4.500 7.300H15.100" stroke="#fff4cc" stroke-width=".8"/></svg>
<span class="t" style="left:79.30px;top:694.00px;font-size:14px;color:#b6b6b6;letter-spacing:-0.092px;">File Stores</span>
<svg class="b" style="left:39.00px;top:723.60px;" width="8.20" height="7.80" viewBox="0 0 8.200 7.800"><path d="M0 0L8.200 3.900 0 7.800z" fill="#7e7e7e"/></svg>
<svg class="b" style="left:55.50px;top:720.80px;" width="16.90" height="13.60" viewBox="0 0 17.5 13.8"><path d="M1 12.3V1.7Q1 1 1.700 1H5.600L7 2.700H13.500Q14.100 2.700 14.100 3.400V6" fill="#f3c766" stroke="#c98a2b" stroke-width="1"/><path d="M1 12.300V1.700Q1 1 1.700 1H5.600L7 2.700H13.500Q14.100 2.700 14.100 3.400V7H4z" fill="#f6cf72"/><path d="M1.800 2h3.400l1.300 1.600h6.700v2.500" fill="none" stroke="#fff2c4" stroke-width=".8"/><path d="M3.800 6.300H16.600L13.600 12.900H.900z" fill="#fbdb85" stroke="#cf9433" stroke-width="1" stroke-linejoin="round"/><path d="M4.500 7.300H15.100" stroke="#fff4cc" stroke-width=".8"/></svg>
<span class="t" style="left:79.30px;top:716.00px;font-size:14px;color:#b6b6b6;letter-spacing:0.254px;">Machines</span>
<div class="b" style="left:494.00px;top:61.00px;width:101.50px;height:28.00px;background:#161616;border-radius:6px 6px 0 0;"></div>
<div class="b" style="left:604.00px;top:61.00px;width:78.00px;height:29.00px;background:#1c1c1c;border-radius:6px 6px 0 0;"></div>
<div class="b" style="left:689.00px;top:61.00px;width:103.50px;height:28.00px;background:#161616;border-radius:6px 6px 0 0;"></div>
<span class="t" style="left:511.20px;top:66.00px;font-size:14px;color:#555555;letter-spacing:-0.430px;font-weight:700;">Data Rules</span>
<span class="t" style="left:621.10px;top:66.00px;font-size:14px;color:#ffffff;letter-spacing:0.503px;font-weight:700;">Tester</span>
<span class="t" style="left:706.20px;top:66.00px;font-size:14px;color:#6a6a6a;letter-spacing:0.197px;font-weight:700;">Advanced</span>
<div class="b" style="left:494.00px;top:89.00px;width:494.00px;height:974.50px;background:#1e1e1e;"></div>
<span class="t" style="left:510.00px;top:100.50px;font-size:13px;color:#8e8e8e;letter-spacing:-0.200px;">TEST BATCH</span>
<div class="b" style="left:494.00px;top:129.00px;width:494.00px;height:1.00px;background:#3c3c3c;"></div>
<svg class="b" style="left:899.00px;top:99.50px;" width="21.00" height="16.00" viewBox="0 0 21 16"><rect x="0" y="0" width="8" height="6.500" fill="#b8b8b8"/><path d="M4 6.500V13.500H12M8 3.500H13" stroke="#9a9a9a" stroke-width="1.200" fill="none"/><rect x="12" y="1" width="8" height="5" fill="#8a8a8a"/><rect x="11" y="11" width="9" height="5" fill="#a0a0a0"/></svg>
<div class="b" style="left:925.40px;top:99.90px;width:18.20px;height:18.20px;background:#008c96;border-radius:2.5px;"></div>
<div class="b" style="left:934.00px;top:104.00px;width:2.00px;height:2.00px;background:#083a3e;"></div>
<div class="b" style="left:934.00px;top:112.00px;width:2.00px;height:2.00px;background:#083a3e;"></div>
<div class="b" style="left:938.00px;top:112.00px;width:2.00px;height:2.00px;background:#083a3e;"></div>
<svg class="b" style="left:949.20px;top:98.70px;" width="20.60" height="20.60" viewBox="0 0 20.600 20.600"><circle cx="10.300" cy="10.300" r="10.300" fill="#dedede"/><path d="M7.800 6.100L15 10.300 7.800 14.500z" fill="#1c1c1c"/></svg>
<svg class="b" style="left:498.20px;top:162.80px;" width="10.20" height="9.40" viewBox="0 0 10.200 9.400"><path d="M0 0H10.200L5.100 9.400z" fill="#7e7e7e"/></svg>
<svg class="b" style="left:520.00px;top:143.00px;" width="60.00" height="50.00" viewBox="0 0 60 50"><path d="M6.100 43.700V6.300H22.800L28.500 11.600H51.200Q54.150 11.600 54.150 14.600V40.700Q54.150 43.700 51.200 43.700H9.100Q6.100 43.700 6.100 40.700V9.300Q6.100 6.300 9.100 6.300H22.800" fill="none" stroke="#ebebeb" stroke-width="5.800" stroke-linejoin="round"/></svg>
<span class="t" style="left:585.70px;top:156.70px;font-size:14px;color:#b0b0b0;letter-spacing:0.145px;">02 - Data Rules - Intangibles Table</span>
<div class="b" style="left:577.00px;top:206.00px;width:403.00px;height:74.00px;background:#272727;border:1px solid #7c7c7c;border-radius:4px;"></div>
<svg class="b" style="left:562.00px;top:237.00px;" width="10.50" height="10.20" viewBox="0 0 10.500 10.200"><path d="M0 0L10.500 5.100 0 10.200z" fill="#7e7e7e"/></svg>
<svg class="b" style="left:588.00px;top:209.00px;" width="52.00" height="68.00" viewBox="0 0 52 68"><path d="M32.400 4H10Q4.100 4 4.100 10V57.700Q4.100 63.700 10 63.700H42Q47.900 63.700 47.900 57.700V19.500z" fill="none" stroke="#ececec" stroke-width="4.500" stroke-linejoin="round"/><path d="M32.400 1.800V15Q32.400 19.500 37 19.500H50.100z" fill="#ececec"/><g stroke="#ececec" stroke-width="4.200" stroke-linecap="round"><path d="M16.100 32H35.900M16.100 39.900H35.900M16.100 47.800H24"/></g></svg>
<span class="t" style="left:650.30px;top:223.60px;font-size:14px;color:#ffffff;letter-spacing:0.134px;">Intangibles (1)</span>
<svg class="b" style="left:649.60px;top:244.60px;" width="16.40" height="16.30" viewBox="0 0 17 16.500"><path d="M2.600 .4H12.700L16.400 4.100V16H2.600z" fill="#ececec"/><path d="M12.700 .4V4.100H16.400z" fill="#bdbdbd"/><rect x=".4" y="2.400" width="9.900" height="3.900" fill="#e81c0c"/><path d="M6 13.600c2-1.400 3.300-3.800 3.500-6.200.5 2.900 2 4.300 4.300 4.700-2.600-.2-5.600.4-7.800 1.500z" fill="none" stroke="#ee4a3e" stroke-width=".9"/></svg>
<span class="t" style="left:669.40px;top:244.30px;font-size:12px;color:#ffffff;letter-spacing:-0.123px;font-style:italic;">Intangibles - Missing Cells.pdf</span>
<svg class="b" style="left:562.00px;top:312.00px;" width="10.50" height="10.20" viewBox="0 0 10.500 10.200"><path d="M0 0L10.500 5.100 0 10.200z" fill="#7e7e7e"/></svg>
<svg class="b" style="left:588.00px;top:284.00px;" width="52.00" height="68.00" viewBox="0 0 52 68"><path d="M32.400 4H10Q4.100 4 4.100 10V57.700Q4.100 63.700 10 63.700H42Q47.900 63.700 47.900 57.700V19.500z" fill="none" stroke="#ececec" stroke-width="4.500" stroke-linejoin="round"/><path d="M32.400 1.800V15Q32.400 19.500 37 19.500H50.100z" fill="#ececec"/><g stroke="#ececec" stroke-width="4.200" stroke-linecap="round"><path d="M16.100 32H35.900M16.100 39.900H35.900M16.100 47.800H24"/></g></svg>
<span class="t" style="left:650.30px;top:298.60px;font-size:14px;color:#b0b0b0;letter-spacing:0.134px;">Intangibles (2)</span>
<svg class="b" style="left:649.60px;top:319.60px;" width="16.40" height="16.30" viewBox="0 0 17 16.500"><path d="M2.600 .4H12.700L16.400 4.100V16H2.600z" fill="#ececec"/><path d="M12.700 .4V4.100H16.400z" fill="#bdbdbd"/><rect x=".4" y="2.400" width="9.900" height="3.900" fill="#e81c0c"/><path d="M6 13.600c2-1.400 3.300-3.800 3.500-6.200.5 2.900 2 4.300 4.300 4.700-2.600-.2-5.600.4-7.800 1.500z" fill="none" stroke="#ee4a3e" stroke-width=".9"/></svg>
<span class="t" style="left:669.40px;top:319.30px;font-size:12px;color:#8a8a8a;letter-spacing:-0.066px;font-style:italic;">Intangibles - Missing Cells with Bad Grand Total.pdf</span>
<svg class="b" style="left:562.00px;top:387.00px;" width="10.50" height="10.20" viewBox="0 0 10.500 10.200"><path d="M0 0L10.500 5.100 0 10.200z" fill="#7e7e7e"/></svg>
<svg class="b" style="left:588.00px;top:359.00px;" width="52.00" height="68.00" viewBox="0 0 52 68"><path d="M32.400 4H10Q4.100 4 4.100 10V57.700Q4.100 63.700 10 63.700H42Q47.900 63.700 47.900 57.700V19.500z" fill="none" stroke="#ececec" stroke-width="4.500" stroke-linejoin="round"/><path d="M32.400 1.800V15Q32.400 19.500 37 19.500H50.100z" fill="#ececec"/><g stroke="#ececec" stroke-width="4.200" stroke-linecap="round"><path d="M16.100 32H35.900M16.100 39.900H35.900M16.100 47.800H24"/></g></svg>
<span class="t" style="left:650.30px;top:373.60px;font-size:14px;color:#b0b0b0;letter-spacing:0.134px;">Intangibles (3)</span>
<svg class="b" style="left:649.60px;top:394.60px;" width="16.40" height="16.30" viewBox="0 0 17 16.500"><path d="M2.600 .4H12.700L16.400 4.100V16H2.600z" fill="#ececec"/><path d="M12.700 .4V4.100H16.400z" fill="#bdbdbd"/><rect x=".4" y="2.400" width="9.900" height="3.900" fill="#e81c0c"/><path d="M6 13.600c2-1.400 3.300-3.800 3.500-6.200.5 2.900 2 4.300 4.300 4.700-2.600-.2-5.600.4-7.800 1.500z" fill="none" stroke="#ee4a3e" stroke-width=".9"/></svg>
<span class="t" style="left:669.40px;top:394.30px;font-size:12px;color:#8a8a8a;letter-spacing:-0.057px;font-style:italic;">Intangibles - Missing Cells with Grand Total.pdf</span>
<div class="b" style="left:994.00px;top:89.00px;width:910.00px;height:488.20px;background:#1e1e1e;"></div>
<div class="b" style="left:1896.00px;top:89.00px;width:8.00px;height:344.00px;background:#164a4e;border-radius:4px;"></div>
<div class="b" style="left:994.00px;top:89.00px;width:693.00px;height:35.60px;background:repeating-linear-gradient(45deg,#1c1c1c 0,#1c1c1c 3.100px,#272727 3.100px,#272727 6.200px);border-top:1px solid #5a5a5a;border-bottom:1px solid #5a5a5a;"></div>
<span class="t" style="left:1010.25px;top:97.10px;font-size:16.5px;color:#c9c9c9;letter-spacing:0.083px;font-weight:700;">Intangibles (1)</span>
<span class="t" style="left:1010.25px;top:135.50px;font-size:15px;color:#c6c6c6;letter-spacing:-0.127px;">Grand Total</span>
<div class="b" style="left:1163.20px;top:133.30px;width:199.60px;height:24.60px;background:#282828;border-radius:4px;"></div>
<span class="t" style="left:1010.25px;top:164.50px;font-size:15px;color:#c6c6c6;letter-spacing:-0.465px;">Full Date</span>
<div class="b" style="left:1163.20px;top:162.35px;width:99.60px;height:24.60px;background:#282828;border-radius:4px;"></div>
<span class="t" style="left:1010.25px;top:193.50px;font-size:15px;color:#c6c6c6;letter-spacing:0.103px;">Month</span>
<div class="b" style="left:1163.20px;top:191.40px;width:99.60px;height:24.60px;background:#282828;border-radius:4px;"></div>
<span class="t" style="left:1010.25px;top:222.50px;font-size:15px;color:#c6c6c6;transform-origin:0 50%;transform:scaleX(0.9148);">Day</span>
<div class="b" style="left:1163.20px;top:220.45px;width:99.60px;height:24.60px;background:#282828;border-radius:4px;"></div>
<span class="t" style="left:1010.25px;top:251.50px;font-size:15px;color:#c6c6c6;transform-origin:0 50%;transform:scaleX(0.9271);">Year</span>
<div class="b" style="left:1163.20px;top:249.50px;width:99.60px;height:24.60px;background:#282828;border-radius:4px;"></div>
<span class="t" style="left:1283.60px;top:136.00px;font-size:14px;color:#efefef;letter-spacing:0.069px;">1048050.00</span>
<span class="t" style="left:1180.50px;top:165.00px;font-size:14px;color:#efefef;letter-spacing:0.339px;">1/14/2021</span>
<span class="t" style="left:1010.30px;top:280.75px;font-size:17px;color:#c4c4c4;letter-spacing:0.425px;font-weight:700;">Intangibles Table</span>
<span class="t" style="left:1135.05px;top:305.90px;font-size:14.5px;color:#b4b4b4;letter-spacing:0.177px;">Description</span>
<span class="t" style="left:1348.95px;top:305.90px;font-size:14.5px;color:#b4b4b4;letter-spacing:-0.455px;">Code</span>
<span class="t" style="left:1433.35px;top:305.90px;font-size:14.5px;color:#b4b4b4;letter-spacing:-0.014px;">Dry Hole</span>
<span class="t" style="left:1509.80px;top:305.90px;font-size:14.5px;color:#b4b4b4;letter-spacing:0.206px;">Completion</span>
<span class="t" style="left:1617.65px;top:305.90px;font-size:14.5px;color:#b4b4b4;letter-spacing:0.318px;">Total</span>
<svg class="b" style="left:1015.40px;top:344.80px;" width="11.00" height="6.60" viewBox="0 0 11 6.600"><path d="M.8 0H7.200L10.800 3.300 7.200 6.600H.8Q0 6.600 0 5.800V.8Q0 0 .8 0z" fill="#575757"/></svg>
<div class="b" style="left:1035.20px;top:335.00px;width:274.70px;height:25.00px;background:#272727;border-radius:4px;"><div class="b" style="left:4.6px;top:0;width:265.50px;height:25px;overflow:hidden;"><span class="t" style="left:0.10px;top:3px;font-size:14px;color:#ececec;letter-spacing:-0.736px;">LEGAL &amp; RECORDING FEES</span></div></div>
<div class="b" style="left:1316.00px;top:335.00px;width:100.00px;height:25.00px;background:#272727;border-radius:4px;"><div class="b" style="left:4.6px;top:0;width:90.80px;height:25px;overflow:hidden;"><span class="t" style="left:17.50px;top:3px;font-size:14px;color:#ececec;letter-spacing:0.215px;">5000010</span></div></div>
<div class="b" style="left:1421.90px;top:335.00px;width:80.20px;height:25.00px;background:#272727;border-radius:4px;"><div class="b" style="left:4.6px;top:0;width:71.00px;height:25px;overflow:hidden;"><span class="t" style="left:0.36px;top:3px;font-size:14px;color:#ececec;letter-spacing:0.062px;">$19,000.00</span></div></div>
<div class="b" style="left:1507.90px;top:335.00px;width:80.20px;height:25.00px;background:#272727;border-radius:4px;"></div>
<div class="b" style="left:1594.00px;top:335.00px;width:80.10px;height:25.00px;background:#272727;border-radius:4px;"><div class="b" style="left:4.6px;top:0;width:70.90px;height:25px;overflow:hidden;"><span class="t" style="left:0.26px;top:3px;font-size:14px;color:#ececec;letter-spacing:0.062px;">$19,000.00</span></div></div>
<svg class="b" style="left:1015.40px;top:375.80px;" width="11.00" height="6.60" viewBox="0 0 11 6.600"><path d="M.8 0H7.200L10.800 3.300 7.200 6.600H.8Q0 6.600 0 5.800V.8Q0 0 .8 0z" fill="#575757"/></svg>
<div class="b" style="left:1035.20px;top:366.00px;width:274.70px;height:25.00px;background:#272727;border-radius:4px;"><div class="b" style="left:4.6px;top:0;width:265.50px;height:25px;overflow:hidden;"><span class="t" style="left:0.10px;top:3px;font-size:14px;color:#ececec;letter-spacing:-0.639px;">WELL SITE DAMAGES &amp; PREEMPTIVE PAYMENTS</span></div></div>
<div class="b" style="left:1316.00px;top:366.00px;width:100.00px;height:25.00px;background:#272727;border-radius:4px;"><div class="b" style="left:4.6px;top:0;width:90.80px;height:25px;overflow:hidden;"><span class="t" style="left:17.50px;top:3px;font-size:14px;color:#ececec;letter-spacing:0.215px;">5000020</span></div></div>
<div class="b" style="left:1421.90px;top:366.00px;width:80.20px;height:25.00px;background:#272727;border-radius:4px;"><div class="b" style="left:4.6px;top:0;width:71.00px;height:25px;overflow:hidden;"><span class="t" style="left:8.21px;top:3px;font-size:14px;color:#ececec;letter-spacing:0.062px;">$5,000.00</span></div></div>
<div class="b" style="left:1507.90px;top:366.00px;width:80.20px;height:25.00px;background:#272727;border-radius:4px;"></div>
<div class="b" style="left:1594.00px;top:366.00px;width:80.10px;height:25.00px;background:#272727;border-radius:4px;"><div class="b" style="left:4.6px;top:0;width:70.90px;height:25px;overflow:hidden;"><span class="t" style="left:8.11px;top:3px;font-size:14px;color:#ececec;letter-spacing:0.062px;">$5,000.00</span></div></div>
<svg class="b" style="left:1015.40px;top:406.80px;" width="11.00" height="6.60" viewBox="0 0 11 6.600"><path d="M.8 0H7.200L10.800 3.300 7.200 6.600H.8Q0 6.600 0 5.800V.8Q0 0 .8 0z" fill="#575757"/></svg>
<div class="b" style="left:1035.20px;top:397.00px;width:274.70px;height:25.00px;background:#272727;border-radius:4px;"><div class="b" style="left:4.6px;top:0;width:265.50px;height:25px;overflow:hidden;"><span class="t" style="left:0.10px;top:3px;font-size:14px;color:#ececec;letter-spacing:-0.355px;">LOCATION &amp; ROAD CONSTRUCTION</span></div></div>
<div class="b" style="left:1316.00px;top:397.00px;width:100.00px;height:25.00px;background:#272727;border-radius:4px;"><div class="b" style="left:4.6px;top:0;width:90.80px;height:25px;overflow:hidden;"><span class="t" style="left:17.50px;top:3px;font-size:14px;color:#ececec;letter-spacing:0.215px;">5000030</span></div></div>
<div class="b" style="left:1421.90px;top:397.00px;width:80.20px;height:25.00px;background:#272727;border-radius:4px;"><div class="b" style="left:4.6px;top:0;width:71.00px;height:25px;overflow:hidden;"><span class="t" style="left:0.36px;top:3px;font-size:14px;color:#ececec;letter-spacing:0.062px;">$53,250.00</span></div></div>
<div class="b" style="left:1507.90px;top:397.00px;width:80.20px;height:25.00px;background:#272727;border-radius:4px;"><div class="b" style="left:4.6px;top:0;width:71.00px;height:25px;overflow:hidden;"><span class="t" style="left:0.36px;top:3px;font-size:14px;color:#ececec;letter-spacing:0.062px;">$37,500.00</span></div></div>
<div class="b" style="left:1594.00px;top:397.00px;width:80.10px;height:25.00px;background:#272727;border-radius:4px;"><div class="b" style="left:4.6px;top:0;width:70.90px;height:25px;overflow:hidden;"><span class="t" style="left:0.26px;top:3px;font-size:14px;color:#ececec;letter-spacing:0.062px;">$90,750.00</span></div></div>
<svg class="b" style="left:1015.40px;top:437.80px;" width="11.00" height="6.60" viewBox="0 0 11 6.600"><path d="M.8 0H7.200L10.800 3.300 7.200 6.600H.8Q0 6.600 0 5.800V.8Q0 0 .8 0z" fill="#575757"/></svg>
<div class="b" style="left:1035.20px;top:428.00px;width:274.70px;height:25.00px;background:#272727;border-radius:4px;"><div class="b" style="left:4.6px;top:0;width:265.50px;height:25px;overflow:hidden;"><span class="t" style="left:0.10px;top:3px;font-size:14px;color:#ececec;letter-spacing:-0.388px;">RESTORATION / RECLAIMATION - FINAL</span></div></div>
<div class="b" style="left:1316.00px;top:428.00px;width:100.00px;height:25.00px;background:#272727;border-radius:4px;"><div class="b" style="left:4.6px;top:0;width:90.80px;height:25px;overflow:hidden;"><span class="t" style="left:17.50px;top:3px;font-size:14px;color:#ececec;letter-spacing:0.215px;">5000031</span></div></div>
<div class="b" style="left:1421.90px;top:428.00px;width:80.20px;height:25.00px;background:#272727;border-radius:4px;"><div class="b" style="left:4.6px;top:0;width:71.00px;height:25px;overflow:hidden;"><span class="t" style="left:8.21px;top:3px;font-size:14px;color:#ececec;letter-spacing:0.062px;">$8,250.00</span></div></div>
<div class="b" style="left:1507.90px;top:428.00px;width:80.20px;height:25.00px;background:#272727;border-radius:4px;"></div>
<div class="b" style="left:1594.00px;top:428.00px;width:80.10px;height:25.00px;background:#272727;border-radius:4px;"><div class="b" style="left:4.6px;top:0;width:70.90px;height:25px;overflow:hidden;"><span class="t" style="left:8.11px;top:3px;font-size:14px;color:#ececec;letter-spacing:0.062px;">$8,250.00</span></div></div>
<svg class="b" style="left:1015.40px;top:468.80px;" width="11.00" height="6.60" viewBox="0 0 11 6.600"><path d="M.8 0H7.200L10.800 3.300 7.200 6.600H.8Q0 6.600 0 5.800V.8Q0 0 .8 0z" fill="#575757"/></svg>
<div class="b" style="left:1035.20px;top:459.00px;width:274.70px;height:25.00px;background:#272727;border-radius:4px;"><div class="b" style="left:4.6px;top:0;width:265.50px;height:25px;overflow:hidden;"><span class="t" style="left:0.10px;top:3px;font-size:14px;color:#ececec;letter-spacing:-0.327px;">LOCATION &amp; ROAD CONST. - MATERIALS</span></div></div>
<div class="b" style="left:1316.00px;top:459.00px;width:100.00px;height:25.00px;background:#272727;border-radius:4px;"><div class="b" style="left:4.6px;top:0;width:90.80px;height:25px;overflow:hidden;"><span class="t" style="left:17.50px;top:3px;font-size:14px;color:#ececec;letter-spacing:0.215px;">5000032</span></div></div>
<div class="b" style="left:1421.90px;top:459.00px;width:80.20px;height:25.00px;background:#272727;border-radius:4px;"><div class="b" style="left:4.6px;top:0;width:71.00px;height:25px;overflow:hidden;"><span class="t" style="left:8.21px;top:3px;font-size:14px;color:#ececec;letter-spacing:0.062px;">$1,250.00</span></div></div>
<div class="b" style="left:1507.90px;top:459.00px;width:80.20px;height:25.00px;background:#272727;border-radius:4px;"></div>
<div class="b" style="left:1594.00px;top:459.00px;width:80.10px;height:25.00px;background:#272727;border-radius:4px;"><div class="b" style="left:4.6px;top:0;width:70.90px;height:25px;overflow:hidden;"><span class="t" style="left:8.11px;top:3px;font-size:14px;color:#ececec;letter-spacing:0.062px;">$1,250.00</span></div></div>
<svg class="b" style="left:1015.40px;top:499.80px;" width="11.00" height="6.60" viewBox="0 0 11 6.600"><path d="M.8 0H7.200L10.800 3.300 7.200 6.600H.8Q0 6.600 0 5.800V.8Q0 0 .8 0z" fill="#575757"/></svg>
<div class="b" style="left:1035.20px;top:490.00px;width:274.70px;height:25.00px;background:#272727;border-radius:4px;"><div class="b" style="left:4.6px;top:0;width:265.50px;height:25px;overflow:hidden;"><span class="t" style="left:0.10px;top:3px;font-size:14px;color:#ececec;letter-spacing:-1.027px;">RIG COSTS</span></div></div>
<div class="b" style="left:1316.00px;top:490.00px;width:100.00px;height:25.00px;background:#272727;border-radius:4px;"><div class="b" style="left:4.6px;top:0;width:90.80px;height:25px;overflow:hidden;"><span class="t" style="left:17.50px;top:3px;font-size:14px;color:#ececec;letter-spacing:0.215px;">5000060</span></div></div>
<div class="b" style="left:1421.90px;top:490.00px;width:80.20px;height:25.00px;background:#272727;border-radius:4px;"><div class="b" style="left:4.6px;top:0;width:71.00px;height:25px;overflow:hidden;"><span class="t" style="left:0.00px;top:3px;font-size:14px;color:#ececec;letter-spacing:0.062px;">$316,000.00</span></div></div>
<div class="b" style="left:1507.90px;top:490.00px;width:80.20px;height:25.00px;background:#272727;border-radius:4px;"><div class="b" style="left:4.6px;top:0;width:71.00px;height:25px;overflow:hidden;"><span class="t" style="left:0.00px;top:3px;font-size:14px;color:#ececec;letter-spacing:0.062px;">$130,000.00</span></div></div>
<div class="b" style="left:1594.00px;top:490.00px;width:80.10px;height:25.00px;background:#272727;border-radius:4px;"><div class="b" style="left:4.6px;top:0;width:70.90px;height:25px;overflow:hidden;"><span class="t" style="left:0.00px;top:3px;font-size:14px;color:#ececec;letter-spacing:0.062px;">$446,000.00</span></div></div>
<svg class="b" style="left:1015.40px;top:530.80px;" width="11.00" height="6.60" viewBox="0 0 11 6.600"><path d="M.8 0H7.200L10.800 3.300 7.200 6.600H.8Q0 6.600 0 5.800V.8Q0 0 .8 0z" fill="#575757"/></svg>
<div class="b" style="left:1035.20px;top:521.00px;width:274.70px;height:25.00px;background:#272727;border-radius:4px;"><div class="b" style="left:4.6px;top:0;width:265.50px;height:25px;overflow:hidden;"><span class="t" style="left:0.10px;top:3px;font-size:14px;color:#ececec;letter-spacing:-0.113px;">RIG MOBILIZATION / DEMOBILIZATION</span></div></div>
<div class="b" style="left:1316.00px;top:521.00px;width:100.00px;height:25.00px;background:#272727;border-radius:4px;"><div class="b" style="left:4.6px;top:0;width:90.80px;height:25px;overflow:hidden;"><span class="t" style="left:17.50px;top:3px;font-size:14px;color:#ececec;letter-spacing:0.215px;">5000061</span></div></div>
<div class="b" style="left:1421.90px;top:521.00px;width:80.20px;height:25.00px;background:#272727;border-radius:4px;"><div class="b" style="left:4.6px;top:0;width:71.00px;height:25px;overflow:hidden;"><span class="t" style="left:0.36px;top:3px;font-size:14px;color:#ececec;letter-spacing:0.062px;">$74,750.00</span></div></div>
<div class="b" style="left:1507.90px;top:521.00px;width:80.20px;height:25.00px;background:#272727;border-radius:4px;"></div>
<div class="b" style="left:1594.00px;top:521.00px;width:80.10px;height:25.00px;background:#272727;border-radius:4px;"><div class="b" style="left:4.6px;top:0;width:70.90px;height:25px;overflow:hidden;"><span class="t" style="left:0.26px;top:3px;font-size:14px;color:#ececec;letter-spacing:0.062px;">$74,750.00</span></div></div>
<svg class="b" style="left:1015.40px;top:561.80px;" width="11.00" height="6.60" viewBox="0 0 11 6.600"><path d="M.8 0H7.200L10.800 3.300 7.200 6.600H.8Q0 6.600 0 5.800V.8Q0 0 .8 0z" fill="#575757"/></svg>
<div class="b" style="left:1035.20px;top:552.00px;width:274.70px;height:25.00px;background:#272727;border-radius:4px;"><div class="b" style="left:4.6px;top:0;width:265.50px;height:25px;overflow:hidden;"><span class="t" style="left:0.10px;top:3px;font-size:14px;color:#ececec;letter-spacing:-0.713px;">RIG COST -CTU</span></div></div>
<div class="b" style="left:1316.00px;top:552.00px;width:100.00px;height:25.00px;background:#272727;border-radius:4px;"><div class="b" style="left:4.6px;top:0;width:90.80px;height:25px;overflow:hidden;"><span class="t" style="left:17.50px;top:3px;font-size:14px;color:#ececec;letter-spacing:0.215px;">5000062</span></div></div>
<div class="b" style="left:1421.90px;top:552.00px;width:80.20px;height:25.00px;background:#272727;border-radius:4px;"></div>
<div class="b" style="left:1507.90px;top:552.00px;width:80.20px;height:25.00px;background:#272727;border-radius:4px;"><div class="b" style="left:4.6px;top:0;width:71.00px;height:25px;overflow:hidden;"><span class="t" style="left:0.00px;top:3px;font-size:14px;color:#ececec;letter-spacing:0.062px;">$187,600.00</span></div></div>
<div class="b" style="left:1594.00px;top:552.00px;width:80.10px;height:25.00px;background:#272727;border-radius:4px;"><div class="b" style="left:4.6px;top:0;width:70.90px;height:25px;overflow:hidden;"><span class="t" style="left:0.00px;top:3px;font-size:14px;color:#ececec;letter-spacing:0.062px;">$187,600.00</span></div></div>
<div class="b" style="left:994.00px;top:577.20px;width:910.00px;height:5.60px;background:#111111;"></div>
<div class="b" style="left:994.00px;top:582.80px;width:910.00px;height:42.80px;background-color:#222222;background-image:linear-gradient(#292929 1px,transparent 1px),linear-gradient(90deg,#292929 1px,transparent 1px);background-size:4px 4px;border-bottom:1px solid #2e2e2e;"></div>
<svg class="b" style="left:1011.00px;top:595.60px;" width="21.20" height="16.60" viewBox="0 0 21.200 16.600"><g fill="none" stroke="#b9b9b9" stroke-width="2"><path d="M1 5.200V2.500Q1 1 2.500 1H5.200M16 1H18.700Q20.200 1 20.200 2.500V5.200M20.200 11.400V14.100Q20.200 15.600 18.700 15.600H16M5.200 15.600H2.500Q1 15.600 1 14.100V11.400"/></g><rect x="4.600" y="4.400" width="12" height="7.800" fill="#b9b9b9"/></svg>
<svg class="b" style="left:1041.00px;top:594.80px;" width="19.00" height="18.40" viewBox="0 0 19 18.400"><rect x="1" y="1" width="17" height="16.400" fill="none" stroke="#b9b9b9" stroke-width="2" stroke-dasharray="2 1.750"/><rect x="5.800" y="5.500" width="7.400" height="7.400" fill="none" stroke="#b9b9b9" stroke-width="2"/></svg>
<svg class="b" style="left:1069.60px;top:593.60px;" width="17.80" height="20.80" viewBox="0 0 17.800 20.800"><rect x="4.300" y=".2" width="13.300" height="16.200" rx="2" fill="#b9b9b9"/><path d="M1 4.800V18Q1 19.800 2.800 19.800H13.300" fill="none" stroke="#b9b9b9" stroke-width="1.800"/></svg>
<svg class="b" style="left:1362.80px;top:598.80px;" width="14.20" height="12.40" viewBox="0 0 14.200 12.400"><rect x="0" y="0" width="2.900" height="12.400" fill="#7e7e7e"/><path d="M14.200 0V12.400L4.600 6.200z" fill="#7e7e7e"/></svg>
<svg class="b" style="left:1394.00px;top:598.40px;" width="9.40" height="13.20" viewBox="0 0 9.400 13.200"><path d="M7.800 1L1.800 6.600 7.800 12.200" fill="none" stroke="#7e7e7e" stroke-width="2.200"/></svg>
<div class="b" style="left:1428.20px;top:591.20px;width:25.60px;height:24.60px;background:#1b1b1b;border:1px solid #454545;border-radius:4.500px;"></div>
<span class="t" style="left:1436.81px;top:593.80px;font-size:14px;color:#bdbdbd;">1</span>
<span class="t" style="left:1458.20px;top:593.80px;font-size:14px;color:#bdbdbd;transform-origin:0 50%;transform:scaleX(0.9121);">/ 1</span>
<svg class="b" style="left:1494.00px;top:598.40px;" width="9.40" height="13.20" viewBox="0 0 9.400 13.200"><path d="M1.600 1L7.600 6.600 1.600 12.200" fill="none" stroke="#7e7e7e" stroke-width="2.200"/></svg>
<svg class="b" style="left:1520.80px;top:598.80px;" width="14.20" height="12.40" viewBox="0 0 14.200 12.400"><rect x="11.300" y="0" width="2.900" height="12.400" fill="#7e7e7e"/><path d="M0 0V12.400L9.600 6.200z" fill="#7e7e7e"/></svg>
<svg class="b" style="left:1788.30px;top:592.30px;" width="24.60" height="24.60" viewBox="0 0 24 24"><path fill="#b9b9b9" d="M19 8H5c-1.660 0-3 1.340-3 3v6h4v4h12v-4h4v-6c0-1.660-1.340-3-3-3zm-3 11H8v-5h8v5zm3-7c-.550 0-1-.450-1-1s.450-1 1-1 1 .450 1 1-.450 1-1 1zm-1-9H6v4h12V3z"/></svg>
<svg class="b" style="left:1818.80px;top:593.80px;" width="20.50" height="20.50" viewBox="0 0 20.500 20.500"><circle cx="10.250" cy="10.250" r="10.250" fill="#b9b9b9"/><rect x="9.100" y="8.700" width="2.300" height="7" fill="#222"/><circle cx="10.250" cy="5.700" r="1.400" fill="#222"/></svg>
<div class="b" style="left:1849.20px;top:594.40px;width:1.00px;height:15.60px;background:#4a4a4a;"></div>
<div class="b" style="left:1858.90px;top:592.20px;width:29.30px;height:20.00px;background:#2b2b2b;border-radius:5px;"></div>
<svg class="b" style="left:1860.00px;top:594.60px;" width="16.00" height="17.00" viewBox="0 0 16 17"><path d="M.3 1.500H3L3.900 2.600H7.600V6.400H.3z" fill="#f2b53a"/><path d="M4 6.400V14.300H8.500M4 8.800H8.500" stroke="#9a9a9a" stroke-width="1" fill="none"/><path d="M9 3.300H12L13.600 4.900V9.400H9z" fill="#f4f4f4"/><path d="M9 10.900H12L13.600 12.500V17H9z" fill="#f4f4f4"/></svg>
<svg class="b" style="left:1877.80px;top:598.90px;" width="7.80" height="7.00" viewBox="0 0 7.800 7"><path d="M0 0H7.800L3.900 7z" fill="#8a8a8a"/></svg>
<div class="b" style="left:994.00px;top:625.60px;width:910.00px;height:438.00px;background:#1f1f1f;"></div>
<div class="b" style="left:1165.5px;top:626.6px;width:566px;height:437px;background:#ffffff;overflow:hidden;" id="page">
<span class="t" style="left:405.40px;top:12.30px;font-size:7.5px;color:#1a1a1a;transform-origin:0 50%;transform:scaleX(0.9114);font-weight:700;text-shadow:0 0 .6px rgba(0,0,0,.55);">DATE</span>
<span class="t" style="left:447.10px;top:12.30px;font-size:7.5px;color:#1c1c1c;transform-origin:0 50%;transform:scaleX(1.1027);text-shadow:0 0 .6px rgba(0,0,0,.55);">01/14/2021</span>
<svg class="b" style="left:51.90px;top:51.30px;" width="463.80" height="156.28" viewBox="0 0 463.80 156.28"><rect x="0" y="0.00" width="462.80" height=".8" fill="#8c8c8c"/><rect x="0" y="12.89" width="462.80" height=".8" fill="#8c8c8c"/><rect x="0" y="25.78" width="462.80" height=".8" fill="#8c8c8c"/><rect x="0" y="38.67" width="462.80" height=".8" fill="#8c8c8c"/><rect x="0" y="51.56" width="462.80" height=".8" fill="#8c8c8c"/><rect x="0" y="64.45" width="462.80" height=".8" fill="#8c8c8c"/><rect x="0" y="77.34" width="462.80" height=".8" fill="#8c8c8c"/><rect x="0" y="90.23" width="462.80" height=".8" fill="#8c8c8c"/><rect x="0" y="103.12" width="462.80" height=".8" fill="#8c8c8c"/><rect x="0" y="116.01" width="462.80" height=".8" fill="#8c8c8c"/><rect x="0" y="128.90" width="462.80" height=".8" fill="#8c8c8c"/><rect x="0" y="141.79" width="462.80" height=".8" fill="#8c8c8c"/><rect x="0" y="154.68" width="462.80" height=".8" fill="#8c8c8c"/><rect x="0.00" y="0" width=".8" height="155.48" fill="#8c8c8c"/><rect x="188.80" y="0" width=".8" height="155.48" fill="#b4b4b4"/><rect x="227.20" y="0" width=".8" height="155.48" fill="#dcdcdc"/><rect x="310.30" y="0" width=".8" height="155.48" fill="#7a7a7a"/><rect x="391.20" y="0" width=".8" height="155.48" fill="#dcdcdc"/><rect x="462.00" y="0" width=".8" height="155.48" fill="#8c8c8c"/></svg>
<span class="t" style="left:55.80px;top:48.30px;font-size:7.5px;color:#1c1c1c;transform-origin:0 50%;transform:scaleX(0.9448);font-weight:700;text-shadow:0 0 .6px rgba(0,0,0,.55);">INTANGIBLES</span>
<span class="t" style="left:244.70px;top:48.30px;font-size:7.5px;color:#1c1c1c;transform-origin:0 50%;transform:scaleX(0.9919);font-weight:700;text-shadow:0 0 .6px rgba(0,0,0,.55);">Code</span>
<span class="t" style="left:330.14px;top:48.30px;font-size:7.5px;color:#1c1c1c;transform-origin:0 50%;transform:scaleX(0.9000);font-weight:700;text-shadow:0 0 .6px rgba(0,0,0,.55);">Dry Hole</span>
<span class="t" style="left:402.38px;top:48.30px;font-size:7.5px;color:#1c1c1c;transform-origin:0 50%;transform:scaleX(0.9000);font-weight:700;text-shadow:0 0 .6px rgba(0,0,0,.55);">Completion</span>
<span class="t" style="left:494.87px;top:48.30px;font-size:7.5px;color:#1c1c1c;transform-origin:0 50%;transform:scaleX(0.9000);font-weight:700;text-shadow:0 0 .6px rgba(0,0,0,.55);">Total</span>
<span class="t" style="left:55.80px;top:60.30px;font-size:7.5px;color:#1c1c1c;transform-origin:0 50%;transform:scaleX(0.9127);text-shadow:0 0 .6px rgba(0,0,0,.55);">LEGAL &amp; RECORDING FEES</span>
<span class="t" style="left:244.70px;top:60.30px;font-size:7.5px;color:#1c1c1c;transform-origin:0 50%;transform:scaleX(1.0547);text-shadow:0 0 .6px rgba(0,0,0,.55);">5000010</span>
<span class="t" style="left:330.78px;top:60.30px;font-size:7.5px;color:#1c1c1c;transform-origin:0 50%;transform:scaleX(1.0000);text-shadow:0 0 .6px rgba(0,0,0,.55);">$19,000</span>
<span class="t" style="left:483.38px;top:60.30px;font-size:7.5px;color:#1c1c1c;transform-origin:0 50%;transform:scaleX(1.0000);text-shadow:0 0 .6px rgba(0,0,0,.55);">$19,000</span>
<span class="t" style="left:55.80px;top:73.30px;font-size:7.5px;color:#1c1c1c;transform-origin:0 50%;transform:scaleX(0.9443);text-shadow:0 0 .6px rgba(0,0,0,.55);">WELL SITE DAMAGES &amp; PREEMPTIVE PAYMENTS</span>
<span class="t" style="left:244.70px;top:73.30px;font-size:7.5px;color:#1c1c1c;transform-origin:0 50%;transform:scaleX(1.0547);text-shadow:0 0 .6px rgba(0,0,0,.55);">5000020</span>
<span class="t" style="left:334.96px;top:73.30px;font-size:7.5px;color:#1c1c1c;transform-origin:0 50%;transform:scaleX(1.0000);text-shadow:0 0 .6px rgba(0,0,0,.55);">$5,000</span>
<span class="t" style="left:487.56px;top:73.30px;font-size:7.5px;color:#1c1c1c;transform-origin:0 50%;transform:scaleX(1.0000);text-shadow:0 0 .6px rgba(0,0,0,.55);">$5,000</span>
<span class="t" style="left:55.80px;top:86.30px;font-size:7.5px;color:#1c1c1c;transform-origin:0 50%;transform:scaleX(0.9503);text-shadow:0 0 .6px rgba(0,0,0,.55);">LOCATION &amp; ROAD CONSTRUCTION</span>
<span class="t" style="left:244.70px;top:86.30px;font-size:7.5px;color:#1c1c1c;transform-origin:0 50%;transform:scaleX(1.0547);text-shadow:0 0 .6px rgba(0,0,0,.55);">5000030</span>
<span class="t" style="left:330.78px;top:86.30px;font-size:7.5px;color:#1c1c1c;transform-origin:0 50%;transform:scaleX(1.0000);text-shadow:0 0 .6px rgba(0,0,0,.55);">$53,250</span>
<span class="t" style="left:412.38px;top:86.30px;font-size:7.5px;color:#1c1c1c;transform-origin:0 50%;transform:scaleX(1.0000);text-shadow:0 0 .6px rgba(0,0,0,.55);">$37,500</span>
<span class="t" style="left:483.38px;top:86.30px;font-size:7.5px;color:#1c1c1c;transform-origin:0 50%;transform:scaleX(1.0000);text-shadow:0 0 .6px rgba(0,0,0,.55);">$90,750</span>
<span class="t" style="left:55.80px;top:99.30px;font-size:7.5px;color:#1c1c1c;transform-origin:0 50%;transform:scaleX(0.9598);text-shadow:0 0 .6px rgba(0,0,0,.55);">RESTORATION / RECLAIMATION – FINAL</span>
<span class="t" style="left:244.70px;top:99.30px;font-size:7.5px;color:#1c1c1c;transform-origin:0 50%;transform:scaleX(1.0547);text-shadow:0 0 .6px rgba(0,0,0,.55);">5000031</span>
<span class="t" style="left:334.96px;top:99.30px;font-size:7.5px;color:#1c1c1c;transform-origin:0 50%;transform:scaleX(1.0000);text-shadow:0 0 .6px rgba(0,0,0,.55);">$8,250</span>
<span class="t" style="left:483.36px;top:99.30px;font-size:7.5px;color:#1c1c1c;transform-origin:0 50%;transform:scaleX(1.0000);text-shadow:0 0 .6px rgba(0,0,0,.55);">$8,250</span>
<span class="t" style="left:55.80px;top:112.30px;font-size:7.5px;color:#1c1c1c;transform-origin:0 50%;transform:scaleX(0.9609);text-shadow:0 0 .6px rgba(0,0,0,.55);">LOCATION &amp; ROAD CONST. – MATERIALS</span>
<span class="t" style="left:244.70px;top:112.30px;font-size:7.5px;color:#1c1c1c;transform-origin:0 50%;transform:scaleX(1.0547);text-shadow:0 0 .6px rgba(0,0,0,.55);">5000032</span>
<span class="t" style="left:334.96px;top:112.30px;font-size:7.5px;color:#1c1c1c;transform-origin:0 50%;transform:scaleX(1.0000);text-shadow:0 0 .6px rgba(0,0,0,.55);">$1,250</span>
<span class="t" style="left:487.56px;top:112.30px;font-size:7.5px;color:#1c1c1c;transform-origin:0 50%;transform:scaleX(1.0000);text-shadow:0 0 .6px rgba(0,0,0,.55);">$1,250</span>
<span class="t" style="left:55.80px;top:125.30px;font-size:7.5px;color:#1c1c1c;transform-origin:0 50%;transform:scaleX(0.8799);text-shadow:0 0 .6px rgba(0,0,0,.55);">RIG COSTS</span>
<span class="t" style="left:244.70px;top:125.30px;font-size:7.5px;color:#1c1c1c;transform-origin:0 50%;transform:scaleX(1.0547);text-shadow:0 0 .6px rgba(0,0,0,.55);">5000060</span>
<span class="t" style="left:326.61px;top:125.30px;font-size:7.5px;color:#1c1c1c;transform-origin:0 50%;transform:scaleX(1.0000);text-shadow:0 0 .6px rgba(0,0,0,.55);">$316,000</span>
<span class="t" style="left:408.21px;top:125.30px;font-size:7.5px;color:#1c1c1c;transform-origin:0 50%;transform:scaleX(1.0000);text-shadow:0 0 .6px rgba(0,0,0,.55);">$130,000</span>
<span class="t" style="left:479.21px;top:125.30px;font-size:7.5px;color:#1c1c1c;transform-origin:0 50%;transform:scaleX(1.0000);text-shadow:0 0 .6px rgba(0,0,0,.55);">$446,000</span>
<span class="t" style="left:55.80px;top:138.30px;font-size:7.5px;color:#1c1c1c;transform-origin:0 50%;transform:scaleX(0.9823);text-shadow:0 0 .6px rgba(0,0,0,.55);">RIG MOBILIZATION / DEMOBILIZATION</span>
<span class="t" style="left:244.70px;top:138.30px;font-size:7.5px;color:#1c1c1c;transform-origin:0 50%;transform:scaleX(1.0547);text-shadow:0 0 .6px rgba(0,0,0,.55);">5000061</span>
<span class="t" style="left:330.78px;top:138.30px;font-size:7.5px;color:#1c1c1c;transform-origin:0 50%;transform:scaleX(1.0000);text-shadow:0 0 .6px rgba(0,0,0,.55);">$74,750</span>
<span class="t" style="left:483.38px;top:138.30px;font-size:7.5px;color:#1c1c1c;transform-origin:0 50%;transform:scaleX(1.0000);text-shadow:0 0 .6px rgba(0,0,0,.55);">$74,750</span>
<span class="t" style="left:55.80px;top:150.30px;font-size:7.5px;color:#1c1c1c;transform-origin:0 50%;transform:scaleX(0.9086);text-shadow:0 0 .6px rgba(0,0,0,.55);">RIG COST – CTU</span>
<span class="t" style="left:244.70px;top:150.30px;font-size:7.5px;color:#1c1c1c;transform-origin:0 50%;transform:scaleX(1.0547);text-shadow:0 0 .6px rgba(0,0,0,.55);">5000062</span>
<span class="t" style="left:408.21px;top:150.30px;font-size:7.5px;color:#1c1c1c;transform-origin:0 50%;transform:scaleX(1.0000);text-shadow:0 0 .6px rgba(0,0,0,.55);">$187,600</span>
<span class="t" style="left:479.21px;top:150.30px;font-size:7.5px;color:#1c1c1c;transform-origin:0 50%;transform:scaleX(1.0000);text-shadow:0 0 .6px rgba(0,0,0,.55);">$187,600</span>
<span class="t" style="left:55.80px;top:163.30px;font-size:7.5px;color:#1c1c1c;transform-origin:0 50%;transform:scaleX(0.9154);text-shadow:0 0 .6px rgba(0,0,0,.55);">FRESH WATER</span>
<span class="t" style="left:244.70px;top:163.30px;font-size:7.5px;color:#1c1c1c;transform-origin:0 50%;transform:scaleX(1.0547);text-shadow:0 0 .6px rgba(0,0,0,.55);">5000070</span>
<span class="t" style="left:334.96px;top:163.30px;font-size:7.5px;color:#1c1c1c;transform-origin:0 50%;transform:scaleX(1.0000);text-shadow:0 0 .6px rgba(0,0,0,.55);">$5,000</span>
<span class="t" style="left:408.21px;top:163.30px;font-size:7.5px;color:#1c1c1c;transform-origin:0 50%;transform:scaleX(1.0000);text-shadow:0 0 .6px rgba(0,0,0,.55);">$190,950</span>
<span class="t" style="left:479.21px;top:163.30px;font-size:7.5px;color:#1c1c1c;transform-origin:0 50%;transform:scaleX(1.0000);text-shadow:0 0 .6px rgba(0,0,0,.55);">$195,950</span>
<span class="t" style="left:55.80px;top:176.30px;font-size:7.5px;color:#1c1c1c;transform-origin:0 50%;transform:scaleX(0.9424);text-shadow:0 0 .6px rgba(0,0,0,.55);">BRINE WATER</span>
<span class="t" style="left:244.70px;top:176.30px;font-size:7.5px;color:#1c1c1c;transform-origin:0 50%;transform:scaleX(1.0547);text-shadow:0 0 .6px rgba(0,0,0,.55);">5000071</span>
<span class="t" style="left:330.78px;top:176.30px;font-size:7.5px;color:#1c1c1c;transform-origin:0 50%;transform:scaleX(1.0000);text-shadow:0 0 .6px rgba(0,0,0,.55);">$12,000</span>
<span class="t" style="left:483.38px;top:176.30px;font-size:7.5px;color:#1c1c1c;transform-origin:0 50%;transform:scaleX(1.0000);text-shadow:0 0 .6px rgba(0,0,0,.55);">$12,000</span>
<span class="t" style="left:55.80px;top:189.30px;font-size:7.5px;color:#1c1c1c;transform-origin:0 50%;transform:scaleX(0.9543);text-shadow:0 0 .6px rgba(0,0,0,.55);">STIMULATION WATER SUPERVISION</span>
<span class="t" style="left:244.70px;top:189.30px;font-size:7.5px;color:#1c1c1c;transform-origin:0 50%;transform:scaleX(1.0547);text-shadow:0 0 .6px rgba(0,0,0,.55);">5000072</span>
<span class="t" style="left:416.56px;top:189.30px;font-size:7.5px;color:#1c1c1c;transform-origin:0 50%;transform:scaleX(1.0000);text-shadow:0 0 .6px rgba(0,0,0,.55);">$7,500</span>
<span class="t" style="left:483.36px;top:189.30px;font-size:7.5px;color:#1c1c1c;transform-origin:0 50%;transform:scaleX(1.0000);text-shadow:0 0 .6px rgba(0,0,0,.55);">$7,500</span>
</div>
<svg class="b" style="left:0;top:0;pointer-events:none" width="1920" height="1080" viewBox="0 0 1920 1080"><defs><filter id="sh" x="-30%" y="-30%" width="170%" height="170%"><feDropShadow dx="1.800" dy="2.800" stdDeviation="2" flood-color="#000" flood-opacity=".6"/></filter></defs><rect x="144.10" y="382.20" width="348.30" height="67.80" fill="none" stroke="#ffff00" stroke-width="2.4"/><rect x="600.10" y="55.10" width="86.70" height="41.70" fill="none" stroke="#ffff00" stroke-width="2.4"/><rect x="946.90" y="96.90" width="26.20" height="23.90" fill="none" stroke="#ffff00" stroke-width="2.4"/><rect x="1002.10" y="129.30" width="367.80" height="30.50" fill="none" stroke="#ffff00" stroke-width="2.4"/><path filter="url(#sh)" fill="#f7931e" d="M437.11 297.73 L370.00 365.60 L364.74 360.40 L350.90 388.90 L379.25 374.74 L373.98 369.54 L441.09 301.67 z"/><path filter="url(#sh)" fill="#f7931e" d="M472.69 77.50 L565.89 77.72 L565.88 85.12 L598.90 75.00 L565.92 64.72 L565.91 72.12 L472.71 71.90 z"/><path filter="url(#sh)" fill="#f7931e" d="M819.50 111.50 L912.00 111.57 L911.99 118.97 L944.00 108.80 L912.01 98.57 L912.00 105.97 L819.50 105.90 z"/><path filter="url(#sh)" fill="#f7931e" d="M455.86 501.70 L388.79 435.99 L393.97 430.71 L365.40 417.00 L379.69 445.28 L384.87 439.99 L451.94 505.70 z"/><path filter="url(#sh)" fill="#f7931e" d="M281.70 570.71 L282.00 476.31 L289.40 476.33 L279.30 446.30 L269.00 476.27 L276.40 476.29 L276.10 570.69 z"/><path filter="url(#sh)" fill="#f7931e" d="M874.70 147.80 L967.20 147.80 L967.20 155.20 L999.70 145.00 L967.20 134.80 L967.20 142.20 L874.70 142.20 z"/><circle filter="url(#sh)" cx="439.1" cy="299.7" r="19.400" fill="#f7931e"/><text x="439.1" y="308.60" text-anchor="middle" font-family="Liberation Sans,sans-serif" font-weight="700" font-size="25" fill="#ffffff">1</text><circle filter="url(#sh)" cx="472.7" cy="74.7" r="19.400" fill="#f7931e"/><text x="472.7" y="83.60" text-anchor="middle" font-family="Liberation Sans,sans-serif" font-weight="700" font-size="25" fill="#ffffff">2</text><circle filter="url(#sh)" cx="819.5" cy="108.7" r="19.400" fill="#f7931e"/><text x="819.5" y="117.60" text-anchor="middle" font-family="Liberation Sans,sans-serif" font-weight="700" font-size="25" fill="#ffffff">3</text><circle filter="url(#sh)" cx="453.9" cy="503.7" r="19.400" fill="#f7931e"/><text x="453.9" y="512.60" text-anchor="middle" font-family="Liberation Sans,sans-serif" font-weight="700" font-size="25" fill="#ffffff">4</text><circle filter="url(#sh)" cx="278.9" cy="570.7" r="19.400" fill="#f7931e"/><text x="278.9" y="579.60" text-anchor="middle" font-family="Liberation Sans,sans-serif" font-weight="700" font-size="25" fill="#ffffff">5</text><circle filter="url(#sh)" cx="874.7" cy="145.0" r="19.400" fill="#f7931e"/><text x="874.7" y="153.90" text-anchor="middle" font-family="Liberation Sans,sans-serif" font-weight="700" font-size="25" fill="#ffffff">6</text></svg>
</body></html>
